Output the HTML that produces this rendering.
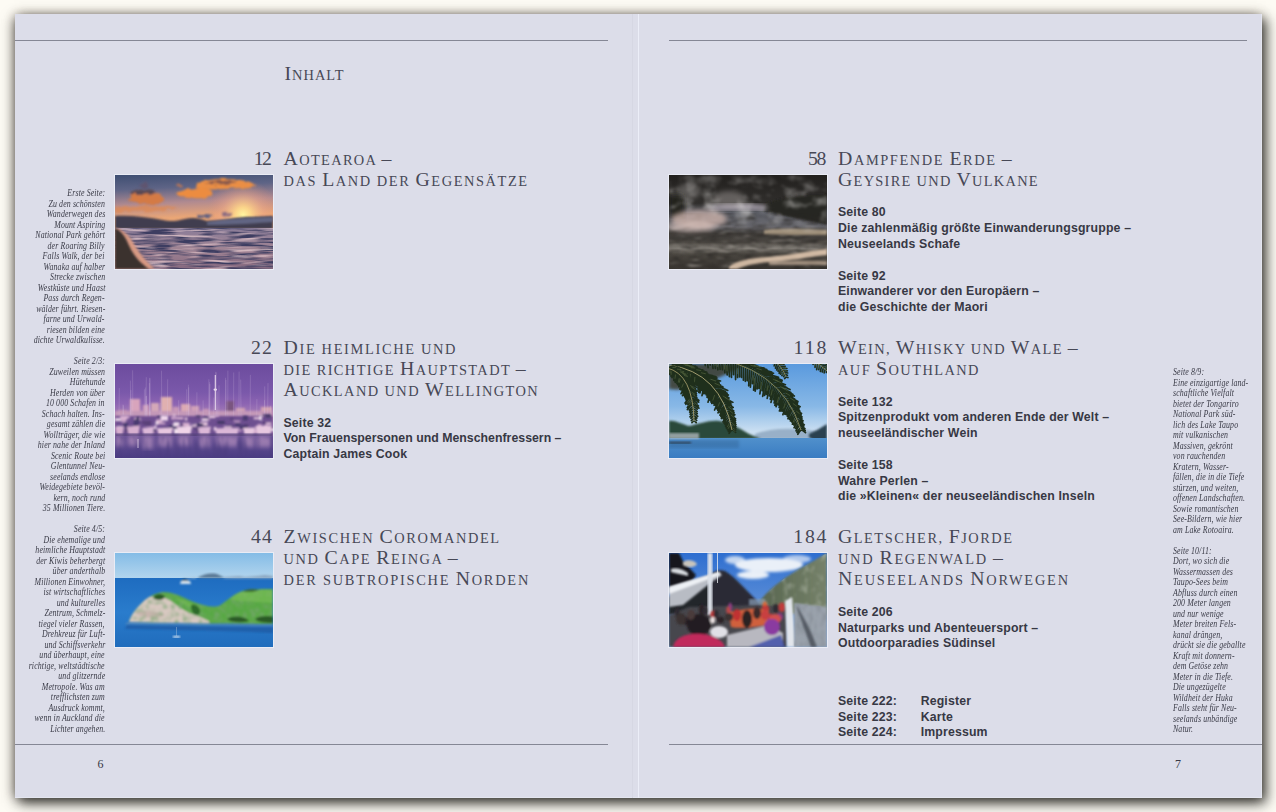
<!DOCTYPE html>
<html><head><meta charset="utf-8"><style>
html,body{margin:0;padding:0;}
body{width:1276px;height:812px;overflow:hidden;background:#fdfbf4;position:relative;}
.page{position:absolute;left:15px;top:14px;width:1247px;height:784px;background:#dcdde9;
 box-shadow: inset -1px -1px 0 #e4e6f0, 4px 5px 12px rgba(35,35,30,0.85), -3px 2px 12px -2px rgba(90,85,80,0.65), 0 -2px 10px -2px rgba(125,108,88,0.38);}
.gut{position:absolute;left:638px;top:14px;width:1px;height:784px;background:#eceef8;}
.gut2{position:absolute;left:632px;top:14px;width:1px;height:784px;background:#d6d7e3;}
.rule{position:absolute;height:1px;background:#858795;}
.l{position:absolute;white-space:pre;line-height:0;}
.ph{position:absolute;overflow:hidden;box-shadow:0 0 0 1px rgba(240,242,250,0.7);}
.ph svg{display:block;}
</style></head><body>
<div class="page"></div>
<div class="gut2"></div><div class="gut"></div>
<div class="rule" style="left:15px;top:40px;width:593px"></div>
<div class="rule" style="left:669px;top:40px;width:578px"></div>
<div class="rule" style="left:15px;top:744px;width:593px"></div>
<div class="rule" style="left:669px;top:744px;width:593px"></div>
<!-- P1 sunset -->
<div class="ph" style="left:115px;top:175px;width:158px;height:94px">
<svg width="158" height="94" viewBox="0 0 158 94">
<defs>
<linearGradient id="p1sky" x1="0" y1="0" x2="0.08" y2="1">
<stop offset="0" stop-color="#3e4e72"/><stop offset="0.16" stop-color="#5e6486"/><stop offset="0.32" stop-color="#b08a90"/><stop offset="0.48" stop-color="#eaa676"/></linearGradient>
<radialGradient id="p1sun" gradientUnits="userSpaceOnUse" cx="128" cy="40" r="36"><stop offset="0" stop-color="#fff6a0"/><stop offset="0.22" stop-color="#fcd68a" stop-opacity="0.95"/><stop offset="0.6" stop-color="#f0a888" stop-opacity="0.45"/><stop offset="1" stop-color="#e0907a" stop-opacity="0"/></radialGradient>
<linearGradient id="p1wat" x1="0" y1="0" x2="0" y2="1"><stop offset="0" stop-color="#8a7c98"/><stop offset="0.5" stop-color="#a08494"/><stop offset="1" stop-color="#866a80"/></linearGradient>
<filter id="b1"><feGaussianBlur stdDeviation="0.8"/></filter>
<filter id="b2"><feGaussianBlur stdDeviation="1.2"/></filter>
<filter id="p1w1" x="0" y="0" width="100%" height="100%" color-interpolation-filters="sRGB"><feTurbulence type="fractalNoise" baseFrequency="0.035 0.4" numOctaves="2" seed="4"/>
<feColorMatrix type="matrix" values="0 0 0 0 0.24  0 0 0 0 0.24  0 0 0 0 0.38  3.6 0 0 0 -1.45"/></filter>
<filter id="p1w2" x="0" y="0" width="100%" height="100%"><feTurbulence type="fractalNoise" baseFrequency="0.035 0.35" numOctaves="2" seed="11"/>
<feColorMatrix type="matrix" values="0 0 0 0 0.84  0 0 0 0 0.62  0 0 0 0 0.64  2.6 0 0 0 -1.35"/></filter>
<filter id="p1cl" x="-20%" y="-50%" width="140%" height="200%"><feTurbulence type="fractalNoise" baseFrequency="0.12 0.2" numOctaves="2" seed="2" result="n"/><feDisplacementMap in="SourceGraphic" in2="n" scale="6" xChannelSelector="R" yChannelSelector="G"/><feGaussianBlur stdDeviation="0.8"/></filter>
</defs>
<rect width="158" height="94" fill="url(#p1sky)"/>
<rect width="158" height="94" fill="url(#p1sun)"/>
<g filter="url(#p1cl)">
<path d="M82,9 C88,4 108,3 124,5 C132,6 142,8 140,11 C132,13 110,14 92,15 C86,15 80,12 82,9Z" fill="#ea8e44"/>
<path d="M90,8 C98,5 112,5 122,7 C112,10 100,10 90,8Z" fill="#8a5a4c"/>
<path d="M62,19 C65,14 78,12 90,14 C100,16 98,21 88,23 C78,24 63,23 62,19Z" fill="#ec8c40"/>
<path d="M14,24 C14,18 22,15 32,17 C42,16 50,20 48,25 C46,29 36,30 26,29 C18,28 14,26 14,24Z" fill="#d47a44"/>
<path d="M16,19 C20,14 32,13 40,16 C36,20 24,21 16,19Z" fill="#5a4852"/>
<path d="M0,33 C10,30 40,30 64,33 C54,36 30,37 0,37Z" fill="#e0884e" opacity="0.7"/>
<ellipse cx="29" cy="10" rx="4" ry="2" fill="#5e5470"/>
<ellipse cx="64" cy="11" rx="3" ry="1.5" fill="#c87850" opacity="0.8"/>
<ellipse cx="90" cy="41" rx="8" ry="2" fill="#5e5e80"/>
<ellipse cx="112" cy="39" rx="5" ry="1.5" fill="#8a6a80"/>
</g>
<path d="M0,41 C15,40 32,42 48,45 C56,47 62,46 70,44 C78,42 84,43 92,46 C104,46 118,43 132,42 C145,42 152,41 158,41 L158,54 L0,54 Z" fill="#403e50" filter="url(#b1)"/>
<path d="M92,47 C108,44 128,43 158,42 L158,47 C130,49 110,50 92,50Z" fill="#6a7090" opacity="0.8" filter="url(#b2)"/>
<rect x="0" y="53" width="158" height="41" fill="url(#p1wat)"/>
<rect x="0" y="53" width="158" height="41" filter="url(#p1w1)"/>
<rect x="0" y="53" width="158" height="41" filter="url(#p1w2)"/>
<path d="M0,53 C6,54 12,58 16,64 C22,74 28,84 40,94 L0,94 Z" fill="#d89a84" filter="url(#b1)"/>
<path d="M0,53 C5,55 9,60 12,66 C16,76 22,86 34,94 L0,94 Z" fill="#3a302e" filter="url(#b1)"/>
</svg></div>

<!-- P2 marina -->
<div class="ph" style="left:115px;top:364px;width:158px;height:94px">
<svg width="158" height="94" viewBox="0 0 158 94">
<defs>
<linearGradient id="p2sky" x1="0" y1="0" x2="0" y2="1"><stop offset="0" stop-color="#6c4c9e"/><stop offset="0.3" stop-color="#7a58aa"/><stop offset="0.42" stop-color="#8c64b2"/><stop offset="0.58" stop-color="#b088b8"/></linearGradient>
<linearGradient id="p2wat" x1="0" y1="0" x2="0" y2="1"><stop offset="0" stop-color="#6a5296"/><stop offset="1" stop-color="#4a3c82"/></linearGradient>
<filter id="c1"><feGaussianBlur stdDeviation="0.8"/></filter>
<filter id="c2"><feGaussianBlur stdDeviation="1.2"/></filter>
<filter id="c3"><feGaussianBlur stdDeviation="2"/></filter>
<filter id="p2r" x="0" y="0" width="100%" height="100%" color-interpolation-filters="sRGB"><feTurbulence type="fractalNoise" baseFrequency="0.22 0.04" numOctaves="2" seed="5"/>
<feColorMatrix type="matrix" values="0 0 0 0 0.3  0 0 0 0 0.24  0 0 0 0 0.5  3 0 0 0 -1.4"/><feGaussianBlur stdDeviation="0.8"/></filter>
</defs>
<rect width="158" height="94" fill="url(#p2sky)"/>
<g filter="url(#c2)"><rect x="15" y="35" width="10" height="20" fill="#d8a4bc"/><rect x="28" y="41" width="6" height="14" fill="#cc9ab8"/><rect x="36" y="39" width="8" height="16" fill="#d4a8b8"/><rect x="46" y="33" width="11" height="22" fill="#e0b0b0"/><rect x="58" y="43" width="6" height="12" fill="#c898b8"/><rect x="66" y="40" width="9" height="15" fill="#dcaab4"/><rect x="76" y="42" width="8" height="13" fill="#d0a0b8"/><rect x="88" y="45" width="6" height="10" fill="#c898b8"/><rect x="111" y="37" width="8" height="18" fill="#7a5480"/><rect x="121" y="44" width="9" height="11" fill="#d0a0b4"/><rect x="132" y="47" width="12" height="8" fill="#c898b8"/><rect x="146" y="43" width="11" height="12" fill="#d4a4b4"/><rect x="4" y="46" width="8" height="9" fill="#c090b0"/><rect x="0" y="47" width="158" height="9" fill="#c498b8"/></g>
<path d="M100.3,11 L100.3,46" stroke="#e8d8ec" stroke-width="1.1"/>
<ellipse cx="100.3" cy="25.6" rx="1.8" ry="1.2" fill="#e8d8ec"/>
<path d="M71.7,25.3L72.1,64M73.7,23.3L73.8,64M30.4,23.5L30.6,64M124.1,7.6L123.9,64M16.0,34.8L16.2,64M8.4,41.3L8.9,64M102.7,27.4L102.4,64M4.3,24.1L3.9,64M31.3,13.2L30.8,64M73.4,20.7L73.8,64M81.9,28.3L81.9,64M104.0,21.4L103.8,64M155.6,41.8L156.0,64M111.0,16.0L110.7,64M46.5,6.7L46.8,64M63.7,36.2L63.5,64M149.5,36.2L149.0,64M34.3,38.6L34.3,64M153.0,19.1L152.5,64M98.9,33.6L98.7,64M15.4,16.6L15.9,64M118.7,8.5L118.5,64M17.6,6.3L17.9,64M29.4,25.3L29.3,64M31.4,31.8L31.0,64M101.1,8.4L101.1,64M34.8,14.3L35.3,64M125.7,15.6L126.1,64M34.4,19.0L34.8,64M100.8,7.8L101.3,64M34.8,13.8L35.1,64M52.7,15.3L52.2,64M15.9,26.1L15.6,64M94.6,18.1L94.6,64M149.7,22.4L149.8,64M135.4,10.9L135.1,64M141.9,35.1L141.6,64M31.2,32.1L31.7,64M32.3,40.1L32.7,64M94.9,20.0L94.5,64M8.0,40.6L7.7,64M110.5,13.8L110.8,64M93.9,15.2L93.5,64M112.9,6.6L112.7,64M88.1,36.4L88.3,64M45.2,38.9L44.9,64" stroke="#d8c4e4" stroke-width="0.6" opacity="0.32" fill="none"/>
<rect x="0" y="52" width="158" height="20" fill="#6e5090" filter="url(#c1)"/>
<g filter="url(#c1)"><rect x="0.6" y="54.3" width="4.7" height="1.7" fill="#d8b0d0"/><rect x="42.5" y="58.5" width="7.8" height="1.8" fill="#d8b0d0"/><rect x="138.8" y="65.7" width="5.9" height="3.9" fill="#d8b0d0"/><rect x="91.2" y="64.8" width="4.8" height="2.8" fill="#3e3262"/><rect x="150.1" y="50.3" width="5.8" height="3.2" fill="#3e3262"/><rect x="48.4" y="66.0" width="2.5" height="3.4" fill="#f0d8ec"/><rect x="140.2" y="61.8" width="6.2" height="4.3" fill="#c8a0c8"/><rect x="53.6" y="61.0" width="7.4" height="4.5" fill="#4a3a70"/><rect x="147.2" y="50.5" width="5.0" height="1.6" fill="#4a3a70"/><rect x="57.9" y="50.2" width="2.4" height="1.8" fill="#e4c4dc"/><rect x="154.9" y="64.1" width="6.4" height="2.9" fill="#f4e4f0"/><rect x="67.6" y="63.4" width="2.5" height="4.1" fill="#f0d8ec"/><rect x="47.0" y="51.4" width="2.1" height="4.9" fill="#e4c4dc"/><rect x="76.6" y="59.8" width="7.5" height="2.4" fill="#f0d8ec"/><rect x="56.1" y="52.3" width="5.7" height="3.3" fill="#c8a0c8"/><rect x="102.3" y="57.1" width="7.4" height="2.6" fill="#3e3262"/><rect x="29.4" y="56.9" width="6.8" height="4.7" fill="#5a4078"/><rect x="58.7" y="59.3" width="3.9" height="2.0" fill="#f4e4f0"/><rect x="53.4" y="64.3" width="2.2" height="1.7" fill="#3e3262"/><rect x="127.9" y="51.8" width="4.8" height="4.7" fill="#4a3a70"/><rect x="58.4" y="58.3" width="6.0" height="4.0" fill="#f4e4f0"/><rect x="48.6" y="63.3" width="3.7" height="3.6" fill="#3e3262"/><rect x="88.2" y="54.9" width="6.7" height="1.6" fill="#d8b0d0"/><rect x="62.0" y="53.0" width="6.6" height="2.4" fill="#d8b0d0"/><rect x="123.9" y="65.7" width="2.7" height="1.9" fill="#c8a0c8"/><rect x="149.4" y="61.0" width="3.2" height="3.2" fill="#d8b0d0"/><rect x="110.8" y="62.1" width="5.2" height="1.6" fill="#5a4078"/><rect x="41.0" y="55.5" width="6.2" height="3.3" fill="#d8b0d0"/><rect x="60.2" y="62.7" width="7.4" height="1.8" fill="#4a3a70"/><rect x="18.5" y="57.3" width="5.8" height="4.7" fill="#4a3a70"/><rect x="84.9" y="60.4" width="5.0" height="4.4" fill="#c8a0c8"/><rect x="71.3" y="60.4" width="3.2" height="4.0" fill="#e4c4dc"/><rect x="31.7" y="64.4" width="7.9" height="4.9" fill="#c8a0c8"/><rect x="39.4" y="61.5" width="2.1" height="3.3" fill="#f0d8ec"/><rect x="67.7" y="58.8" width="6.6" height="3.2" fill="#f0d8ec"/><rect x="32.5" y="63.9" width="4.6" height="1.6" fill="#c8a0c8"/><rect x="106.5" y="64.7" width="4.8" height="5.0" fill="#f4e4f0"/><rect x="147.4" y="57.9" width="7.7" height="1.8" fill="#5a4078"/><rect x="67.4" y="58.9" width="7.0" height="3.5" fill="#d8b0d0"/><rect x="80.6" y="63.5" width="5.4" height="2.6" fill="#4a3a70"/><rect x="148.9" y="63.9" width="5.7" height="2.6" fill="#d8b0d0"/><rect x="151.0" y="58.4" width="5.4" height="2.2" fill="#e4c4dc"/><rect x="77.5" y="59.7" width="2.2" height="4.9" fill="#4a3a70"/><rect x="84.0" y="65.8" width="2.7" height="1.8" fill="#d8b0d0"/><rect x="8.4" y="58.6" width="4.5" height="4.8" fill="#4a3a70"/><rect x="40.5" y="57.6" width="2.8" height="3.0" fill="#f4e4f0"/><rect x="80.9" y="51.7" width="4.5" height="1.6" fill="#3e3262"/><rect x="18.5" y="62.5" width="2.1" height="2.2" fill="#5a4078"/><rect x="-0.1" y="54.5" width="6.3" height="2.4" fill="#f4e4f0"/><rect x="14.6" y="61.7" width="2.7" height="3.3" fill="#3e3262"/><rect x="111.4" y="61.2" width="7.3" height="1.6" fill="#4a3a70"/><rect x="128.4" y="59.9" width="5.2" height="4.5" fill="#5a4078"/><rect x="81.7" y="63.6" width="5.7" height="4.5" fill="#5a4078"/><rect x="142.5" y="60.0" width="4.1" height="2.1" fill="#c8a0c8"/><rect x="138.7" y="53.1" width="6.7" height="2.2" fill="#e4c4dc"/><rect x="19.2" y="53.8" width="6.4" height="2.4" fill="#e4c4dc"/><rect x="66.7" y="65.1" width="5.3" height="4.0" fill="#5a4078"/><rect x="61.6" y="61.0" width="2.1" height="2.2" fill="#c8a0c8"/><rect x="142.0" y="65.5" width="2.7" height="3.3" fill="#c8a0c8"/><rect x="77.4" y="61.0" width="3.1" height="1.7" fill="#e4c4dc"/><rect x="1.8" y="62.2" width="5.7" height="4.7" fill="#f4e4f0"/><rect x="21.2" y="53.0" width="3.2" height="4.4" fill="#3e3262"/><rect x="144.4" y="51.5" width="2.4" height="4.8" fill="#f4e4f0"/><rect x="10.3" y="51.5" width="4.3" height="3.0" fill="#c8a0c8"/><rect x="66.0" y="59.6" width="2.1" height="4.0" fill="#5a4078"/><rect x="26.6" y="57.3" width="6.4" height="2.9" fill="#5a4078"/><rect x="93.6" y="51.5" width="6.8" height="2.6" fill="#e4c4dc"/><rect x="124.7" y="61.3" width="7.2" height="3.7" fill="#4a3a70"/><rect x="88.0" y="53.1" width="5.5" height="2.7" fill="#3e3262"/><rect x="42.2" y="51.9" width="6.5" height="2.1" fill="#4a3a70"/><rect x="19.0" y="55.3" width="5.2" height="2.8" fill="#4a3a70"/><rect x="118.9" y="56.5" width="6.3" height="1.7" fill="#c8a0c8"/><rect x="45.7" y="51.6" width="7.3" height="5.0" fill="#f0d8ec"/><rect x="34.7" y="65.1" width="6.0" height="2.7" fill="#4a3a70"/><rect x="88.0" y="58.5" width="4.3" height="5.0" fill="#5a4078"/><rect x="108.8" y="62.2" width="7.9" height="1.6" fill="#e4c4dc"/><rect x="114.7" y="54.1" width="4.4" height="1.7" fill="#5a4078"/><rect x="100.4" y="50.2" width="3.6" height="2.5" fill="#c8a0c8"/><rect x="84.9" y="58.1" width="7.8" height="3.5" fill="#e4c4dc"/><rect x="98.8" y="63.0" width="2.5" height="3.6" fill="#f0d8ec"/><rect x="59.1" y="65.0" width="4.3" height="4.9" fill="#f4e4f0"/><rect x="83.6" y="59.5" width="4.6" height="3.2" fill="#3e3262"/><rect x="81.2" y="59.6" width="4.2" height="2.5" fill="#3e3262"/><rect x="86.6" y="54.5" width="6.3" height="2.5" fill="#f0d8ec"/><rect x="120.1" y="59.4" width="5.8" height="2.9" fill="#4a3a70"/><rect x="6.3" y="55.0" width="4.4" height="3.5" fill="#c8a0c8"/><rect x="9.6" y="64.5" width="4.6" height="3.2" fill="#5a4078"/><rect x="5.2" y="51.6" width="6.9" height="4.7" fill="#d8b0d0"/><rect x="152.7" y="63.1" width="5.6" height="1.9" fill="#4a3a70"/><rect x="70.0" y="53.3" width="2.3" height="3.3" fill="#e4c4dc"/><path d="M0,63.1 L9,62.8 L7.5,70.5 L1.5,70.5Z" fill="#d8b0d0"/><path d="M12,62.8 L25,61.6 L23.5,70.5 L13.5,70.5Z" fill="#d8b0d0"/><path d="M27,64.2 L39,62.6 L37.5,70.5 L28.5,70.5Z" fill="#dcb8d8"/><path d="M42,64.2 L58,63.7 L56.5,70.5 L43.5,70.5Z" fill="#e8c8e0"/><path d="M62,62.9 L77,61.9 L75.5,70.5 L63.5,70.5Z" fill="#f0d4e8"/><path d="M83,63.8 L96,62.4 L94.5,70.5 L84.5,70.5Z" fill="#dcb8d8"/><path d="M100,64.3 L124,63.9 L122.5,70.5 L101.5,70.5Z" fill="#dcb8d8"/><path d="M128,64.0 L140,63.6 L138.5,70.5 L129.5,70.5Z" fill="#e8c8e0"/><path d="M141,62.0 L157,61.5 L155.5,70.5 L142.5,70.5Z" fill="#e8c8e0"/></g>
<rect x="0" y="70" width="158" height="3" fill="#4e3e78" filter="url(#c1)"/>
<rect x="0" y="72" width="158" height="22" fill="url(#p2wat)"/>
<g filter="url(#c3)" opacity="0.55"><rect x="1" y="72" width="7" height="10.3" fill="#c8a0c8"/><rect x="13" y="72" width="11" height="9.8" fill="#c8a0c8"/><rect x="28" y="72" width="10" height="12.8" fill="#c8a0c8"/><rect x="43" y="72" width="14" height="10.5" fill="#c8a0c8"/><rect x="63" y="72" width="13" height="9.4" fill="#c8a0c8"/><rect x="84" y="72" width="11" height="11.2" fill="#c8a0c8"/><rect x="101" y="72" width="22" height="10.5" fill="#c8a0c8"/><rect x="129" y="72" width="10" height="11.1" fill="#c8a0c8"/><rect x="142" y="72" width="14" height="11.1" fill="#c8a0c8"/></g>
<rect x="0" y="72" width="158" height="22" filter="url(#p2r)" opacity="0.7"/>
<path d="M23,75 L23,84" stroke="#f0e0f0" stroke-width="0.9" opacity="0.8"/>
</svg></div>

<!-- P3 island -->
<div class="ph" style="left:115px;top:553px;width:158px;height:94px">
<svg width="158" height="94" viewBox="0 0 158 94">
<defs>
<linearGradient id="p3sky" x1="0" y1="0" x2="0" y2="1"><stop offset="0" stop-color="#84bce6"/><stop offset="1" stop-color="#b4d6ee"/></linearGradient>
<linearGradient id="p3sea" x1="0" y1="0" x2="0" y2="1"><stop offset="0" stop-color="#1e6cc0"/><stop offset="0.5" stop-color="#2a7ccc"/><stop offset="1" stop-color="#206cbc"/></linearGradient>
<filter id="d1"><feGaussianBlur stdDeviation="0.8"/></filter>
<filter id="d2"><feGaussianBlur stdDeviation="1.2"/></filter>
<filter id="p3t" x="0" y="0" width="100%" height="100%"><feTurbulence type="fractalNoise" baseFrequency="0.25" numOctaves="2" seed="3"/>
<feColorMatrix type="matrix" values="0 0 0 0 0.2  0 0 0 0 0.38  0 0 0 0 0.18  3.5 0 0 0 -1.7"/><feGaussianBlur stdDeviation="0.8"/></filter>
<clipPath id="p3isl"><path d="M14,69 C16,62 22,54 30,47 C36,42 42,40 48,39 C56,39 64,42 74,47 C86,52 96,55 104,53 C112,48 120,40 128,38 C140,36 150,36 158,36 L158,71 C120,71 60,70 14,69Z"/></clipPath>
</defs>
<rect width="158" height="26" fill="url(#p3sky)"/>
<rect y="25" width="158" height="69" fill="url(#p3sea)"/>
<g filter="url(#d1)">
<path d="M82,25 C88,21 98,19 104,22 C106,23 108,24 110,25Z" fill="#5a7894"/>
<path d="M110,24 L124,23 L130,24 L142,23 L150,22 L158,23 L158,25.5 L108,25.5Z" fill="#8aa6c0"/>
<path d="M72,25 L80,24 L82,25.5 L70,25.5Z" fill="#a8c0d4"/>
<path d="M66,28 C68,25 72,25 74,28Z" fill="#3a5a70"/>
<path d="M66,28 L75,28 L76,31 L65,31Z" fill="#d8e4ee"/>
</g>
<g filter="url(#d1)">
<path d="M14,69 C16,62 22,54 30,47 C36,42 42,40 48,39 C56,39 64,42 74,47 C86,52 96,55 104,53 C112,48 120,40 128,38 C140,36 150,36 158,36 L158,71 C120,71 60,70 14,69Z" fill="#58a844"/>
<g clip-path="url(#p3isl)">
<path d="M0,80 L10,66 C16,58 24,48 34,44 C42,42 50,44 56,48 C64,54 72,60 80,62 C86,64 90,66 94,68 L96,80Z" fill="#dccac4"/>
<path d="M20,60 C30,56 40,58 50,62 C44,66 30,66 20,60Z" fill="#c0a8a4" opacity="0.6"/>
<rect x="0" y="30" width="158" height="45" filter="url(#p3t)"/>
<path d="M110,44 C122,38 140,36 158,37 L158,50 C140,48 122,50 110,44Z" fill="#7cc058" opacity="0.6"/>
<path d="M60,45 C68,46 76,50 84,54 L74,54 C70,52 64,48 60,45Z" fill="#7cc058" opacity="0.5"/>
</g>
<path d="M38,44 C42,40 48,40 50,44 C48,48 40,48 38,44Z" fill="#2a5a28"/>
<path d="M76,52 C80,50 86,54 85,60 C82,64 76,62 76,52Z" fill="#2e6a2a"/>
<path d="M112,66 C118,62 130,63 134,68 C126,70 116,70 112,66Z" fill="#2a5a28"/>
<path d="M140,66 C146,62 156,63 158,64 L158,70 C150,70 142,69 140,66Z" fill="#2a5a28"/>
<path d="M128,38 C132,36 140,36 144,37 C140,39 132,40 128,38Z" fill="#3a6a30"/>
</g>
<path d="M12,69 C60,70 120,71 158,71 L158,74 C120,74 60,73 10,72Z" fill="#a0a0a0" opacity="0.25" filter="url(#d1)"/>
<path d="M12,72 C60,73 120,74 158,74 L158,80 C120,78 60,77 10,76Z" fill="#1a4c90" opacity="0.5" filter="url(#d2)"/>
<rect x="58" y="83" width="7" height="1.8" fill="#e8f0f8" filter="url(#d1)"/>
<path d="M61.5,74 L61.5,83" stroke="#c8d8e8" stroke-width="0.5" opacity="0.7"/>
</svg></div>

<!-- P4 geysers -->
<div class="ph" style="left:669px;top:175px;width:158px;height:94px">
<svg width="158" height="94" viewBox="0 0 158 94">
<defs>
<linearGradient id="p4bg" x1="0" y1="0" x2="0" y2="1"><stop offset="0" stop-color="#22201e"/><stop offset="0.3" stop-color="#302e2c"/><stop offset="0.4" stop-color="#5a5c64"/><stop offset="0.55" stop-color="#6a6a70"/><stop offset="0.62" stop-color="#3e3b38"/><stop offset="0.72" stop-color="#4e4a45"/><stop offset="0.78" stop-color="#8a857e"/><stop offset="0.84" stop-color="#4a4640"/><stop offset="1" stop-color="#3a3632"/></linearGradient>
<filter id="e1"><feGaussianBlur stdDeviation="0.8"/></filter>
<filter id="e2"><feGaussianBlur stdDeviation="2.5"/></filter>
<filter id="p4s" x="0" y="0" width="100%" height="100%"><feTurbulence type="fractalNoise" baseFrequency="0.06 0.09" numOctaves="3" seed="6"/>
<feColorMatrix type="matrix" values="0 0 0 0 0.78  0 0 0 0 0.76  0 0 0 0 0.74  2.6 0 0 0 -1.25"/><feGaussianBlur stdDeviation="1.2"/></filter>
<filter id="p4g" x="0" y="0" width="100%" height="100%" color-interpolation-filters="sRGB"><feTurbulence type="fractalNoise" baseFrequency="0.08 0.5" numOctaves="2" seed="12"/>
<feColorMatrix type="matrix" values="0 0 0 0 0.16  0 0 0 0 0.15  0 0 0 0 0.14  2.2 0 0 0 -0.95"/><feGaussianBlur stdDeviation="0.8"/></filter>
<filter id="p4h" x="0" y="0" width="100%" height="100%"><feTurbulence type="fractalNoise" baseFrequency="0.06 0.4" numOctaves="2" seed="21"/>
<feColorMatrix type="matrix" values="0 0 0 0 0.8  0 0 0 0 0.74  0 0 0 0 0.68  2.2 0 0 0 -1.3"/><feGaussianBlur stdDeviation="0.8"/></filter>
<linearGradient id="p4m" x1="0" y1="0" x2="0" y2="1"><stop offset="0" stop-color="#fff" stop-opacity="0.45"/><stop offset="0.6" stop-color="#fff" stop-opacity="1"/><stop offset="1" stop-color="#fff" stop-opacity="0"/></linearGradient>
<mask id="p4mask"><rect width="158" height="60" fill="url(#p4m)"/></mask>
</defs>
<rect width="158" height="94" fill="url(#p4bg)"/>
<path d="M95,30 C110,22 140,18 158,20 L158,50 C140,46 110,40 95,36Z" fill="#282624" filter="url(#e1)"/>
<path d="M0,18 L14,20 L16,44 L0,42Z" fill="#22201d" filter="url(#e2)"/>
<path d="M40,31 C60,28 80,28 98,31 L98,35 C80,35 60,35 40,35Z" fill="#a8a0ac" filter="url(#e2)"/>
<rect x="0" y="38" width="158" height="56" filter="url(#p4g)"/>
<rect x="0" y="50" width="158" height="44" filter="url(#p4h)" opacity="0.7"/>
<g filter="url(#e1)">
<path d="M95,55 C110,53 140,54 158,55 L158,60 C130,60 110,60 95,59Z" fill="#dcc4a4" opacity="0.6"/>
<path d="M60,92 C66,86 82,83 100,82 C120,80 140,76 158,74 L158,80 C140,82 120,86 100,87 C86,88 74,91 68,94 L60,94Z" fill="#e8cdb4" opacity="0.85"/>
<path d="M100,87 C115,86 135,85 158,86 L158,90 C135,90 115,90 100,90Z" fill="#d8c0a8" opacity="0.6"/>
</g>
<g mask="url(#p4mask)" opacity="0.6"><rect x="0" y="0" width="158" height="60" filter="url(#p4s)"/></g>
<g filter="url(#e2)">
<ellipse cx="30" cy="44" rx="28" ry="9" fill="#d8bcb4" opacity="0.7"/>
<ellipse cx="22" cy="52" rx="24" ry="5" fill="#e4ccc4" opacity="0.6"/>
<ellipse cx="60" cy="24" rx="16" ry="8" fill="#c8c4c0" opacity="0.35"/>
<ellipse cx="20" cy="16" rx="12" ry="8" fill="#c8c4c0" opacity="0.3"/>
</g>
</svg></div>

<!-- P5 palm -->
<div class="ph" style="left:669px;top:364px;width:158px;height:94px">
<svg width="158" height="94" viewBox="0 0 158 94">
<defs>
<linearGradient id="p5sky" x1="0" y1="0" x2="0" y2="1"><stop offset="0" stop-color="#5a9ade"/><stop offset="0.45" stop-color="#88b8e6"/><stop offset="0.72" stop-color="#cce0f2"/></linearGradient>
<linearGradient id="p5wat" x1="0" y1="0" x2="0" y2="1"><stop offset="0" stop-color="#5090cc"/><stop offset="1" stop-color="#3a7cc2"/></linearGradient>
<filter id="f1"><feGaussianBlur stdDeviation="0.8"/></filter>
<filter id="f2"><feGaussianBlur stdDeviation="0.8"/></filter>
<filter id="f3"><feGaussianBlur stdDeviation="1.6"/></filter>
</defs>
<rect width="158" height="94" fill="url(#p5sky)"/>
<path d="M86,70 C96,66 110,64 125,65 C135,65 142,66 148,68 L148,75 L86,75Z" fill="#98b0c8" filter="url(#f1)"/>
<path d="M0,57 C6,56 12,60 20,62 C30,60 40,56 50,57 C60,58 70,64 80,70 L92,75 L0,76Z" fill="#2c4a3a" filter="url(#f1)"/>
<path d="M140,70 C146,67 152,64 158,60 L158,82 C150,80 144,76 140,73Z" fill="#2a4050" filter="url(#f1)"/>
<rect x="0" y="74" width="158" height="20" fill="url(#p5wat)"/>
<rect x="0" y="76" width="70" height="8" fill="#2a5a88" opacity="0.35" filter="url(#f3)"/>
<rect x="0" y="69" width="30" height="6" fill="#c0c4cc" opacity="0.7" filter="url(#f1)"/>
<rect x="0" y="78" width="22" height="1.6" fill="#2a3440" filter="url(#f1)"/>
<path d="M0,0 L80,0 C62,8 42,18 22,24 C12,26 4,26 0,25Z" fill="#3e3a2a" opacity="0.85" filter="url(#f3)"/>
<g><path d="M34.9,-7.5Q35.6,-4.4 36.3,1.7M34.9,-7.5Q36.3,-10.2 42.5,-10.1M37.5,-7.1Q38.3,-3.6 39.1,3.7M37.5,-7.1Q39.2,-10.4 46.4,-10.1M40.1,-6.8Q40.6,-4.1 41.2,1.2M40.1,-6.8Q41.3,-9.1 46.7,-8.9M42.6,-6.4Q43.3,-2.8 44.0,4.4M42.6,-6.4Q44.4,-9.5 51.6,-9.1M45.1,-5.9Q45.7,-2.5 46.4,4.5M45.1,-5.9Q46.9,-9.0 53.9,-8.5M47.6,-5.5Q48.2,-1.7 48.9,5.8M47.6,-5.5Q49.6,-8.7 57.1,-8.1M50.1,-5.0Q50.6,-1.5 51.1,5.5M50.1,-5.0Q51.9,-8.0 58.9,-7.3M52.5,-4.5Q52.9,-1.0 53.4,5.8M52.5,-4.5Q54.3,-7.4 61.2,-6.6M54.9,-3.9Q55.4,0.3 55.9,8.8M54.9,-3.9Q57.2,-7.5 65.7,-6.4M57.2,-3.3Q57.7,1.5 58.2,11.0M57.2,-3.3Q59.9,-7.3 69.4,-6.0M59.5,-2.7Q59.9,2.4 60.4,12.6M59.5,-2.7Q62.5,-6.9 72.6,-5.4M61.8,-2.0Q62.2,3.1 62.5,13.5M61.8,-2.0Q64.9,-6.2 75.1,-4.6M64.1,-1.4Q64.3,2.6 64.5,10.7M64.1,-1.4Q66.5,-4.6 74.4,-3.2M66.3,-0.7Q66.4,4.8 66.6,15.6M66.3,-0.7Q69.7,-4.9 80.3,-2.9M68.5,0.1Q68.5,4.5 68.6,13.4M68.5,0.1Q71.3,-3.4 80.0,-1.6M70.6,0.9Q70.6,4.9 70.6,12.8M70.6,0.9Q73.2,-2.2 81.0,-0.5M72.7,1.7Q72.6,5.6 72.5,13.5M72.7,1.7Q75.3,-1.3 83.0,0.5M74.8,2.5Q74.6,7.1 74.4,16.2M74.8,2.5Q77.9,-0.9 86.8,1.3M76.9,3.4Q76.6,8.0 76.3,17.3M76.9,3.4Q80.1,0.0 89.0,2.3M78.9,4.3Q78.5,8.4 78.2,16.8M78.9,4.3Q81.8,1.3 89.9,3.5M80.9,5.2Q80.3,10.7 79.7,21.8M80.9,5.2Q84.8,1.3 95.5,4.3M82.8,6.2Q82.1,11.8 81.4,23.1M82.8,6.2Q86.9,2.3 97.8,5.5M84.7,7.2Q84.1,11.3 83.5,19.7M84.7,7.2Q87.8,4.4 95.8,6.9M86.6,8.2Q85.6,14.2 84.6,26.2M86.6,8.2Q91.2,4.2 102.7,8.0M88.5,9.2Q87.4,15.2 86.2,27.1M88.5,9.2Q93.1,5.4 104.5,9.3M90.3,10.3Q89.3,15.1 88.2,24.9M90.3,10.3Q94.1,7.3 103.3,10.6M92.0,11.5Q91.1,15.8 90.0,24.5M92.0,11.5Q95.6,8.8 103.8,11.9M93.8,12.6Q92.4,18.3 90.9,29.9M93.8,12.6Q98.5,9.2 109.5,13.4M95.5,13.8Q94.4,18.0 93.2,26.6M95.5,13.8Q99.1,11.3 107.2,14.6M97.2,15.0Q95.5,20.7 93.7,32.4M97.2,15.0Q102.1,11.7 113.1,16.3M98.8,16.2Q97.3,21.2 95.6,31.4M98.8,16.2Q103.2,13.5 112.7,17.6M100.4,17.5Q99.0,21.7 97.5,30.4M100.4,17.5Q104.2,15.2 112.3,18.9M102.0,18.8Q100.2,23.9 98.2,34.4M102.0,18.8Q106.7,16.2 116.4,20.7M103.6,20.2Q102.1,24.0 100.5,32.0M103.6,20.2Q107.2,18.2 114.6,21.8M105.1,21.5Q103.3,25.9 101.3,35.1M105.1,21.5Q109.3,19.4 117.7,23.6M106.6,22.9Q104.4,27.9 102.0,38.4M106.6,22.9Q111.4,20.6 121.0,25.5M108.0,24.4Q106.3,27.9 104.5,35.6M108.0,24.4Q111.6,22.7 118.5,26.4M109.4,25.8Q107.3,30.0 105.1,39.0M109.4,25.8Q113.7,24.0 121.8,28.5M110.8,27.3Q108.5,31.7 105.9,41.3M110.8,27.3Q115.4,25.5 124.0,30.4M112.1,28.9Q109.7,33.2 107.1,42.7M112.1,28.9Q116.8,27.1 125.3,32.1M113.5,30.4Q111.5,33.7 109.4,40.9M113.5,30.4Q117.0,29.2 123.5,33.1M114.7,32.0Q112.5,35.6 110.1,43.5M114.7,32.0Q118.7,30.7 125.8,35.1M116.0,33.6Q113.3,37.7 110.4,47.0M116.0,33.6Q120.6,32.2 128.9,37.5M117.2,35.3Q114.7,38.9 112.0,47.2M117.2,35.3Q121.4,34.1 128.7,38.9M118.4,37.0Q116.2,40.0 113.8,47.1M118.4,37.0Q122.0,36.0 128.2,40.2M119.5,38.7Q116.8,42.2 113.9,50.6M119.5,38.7Q123.8,37.7 131.1,42.7M120.6,40.4Q118.4,43.3 115.9,50.1M120.6,40.4Q124.2,39.7 130.0,43.9M121.7,42.2Q119.7,44.7 117.4,50.6M121.7,42.2Q124.8,41.6 129.9,45.4M122.7,44.0Q120.7,46.4 118.4,52.3M122.7,44.0Q125.9,43.5 130.9,47.3M123.7,45.9Q121.5,48.4 118.9,54.7M123.7,45.9Q127.1,45.4 132.5,49.5M124.7,47.7Q122.8,49.8 120.5,55.1M124.7,47.7Q127.6,47.4 132.1,50.9M125.7,49.6Q123.7,51.7 121.4,56.9M125.7,49.6Q128.5,49.4 133.0,52.9M126.6,51.6Q124.8,53.3 122.8,57.9M126.6,51.6Q129.1,51.4 132.9,54.6M127.5,53.5Q125.5,55.4 123.4,60.1M127.5,53.5Q130.1,53.4 134.1,56.8M128.3,55.5Q126.7,57.0 124.9,60.9M128.3,55.5Q130.5,55.5 133.7,58.3M129.1,57.6Q127.2,59.2 125.1,63.7M129.1,57.6Q131.6,57.5 135.3,60.8M129.9,59.6Q128.4,60.9 126.7,64.4M129.9,59.6Q131.8,59.6 134.7,62.2M130.6,61.7Q129.0,63.1 127.0,66.8M130.6,61.7Q132.7,61.8 135.9,64.6M131.3,63.8Q129.8,65.1 128.0,68.5M131.3,63.8Q133.3,63.9 136.2,66.6M132.0,66.0Q130.5,67.1 128.8,70.3M132.0,66.0Q133.8,66.1 136.5,68.6" stroke="#1f2f1c" stroke-width="1.7" stroke-linecap="round" fill="none"/><path d="M44.4,-9.5L48.5,-9.3M45.7,-2.5L46.1,1.5M48.2,-1.7L48.6,2.6M49.6,-8.7L53.9,-8.4M54.3,-7.4L58.3,-6.9M55.4,0.3L55.6,5.2M57.2,-7.5L62.1,-6.9M57.7,1.5L58.0,6.9M59.9,-7.3L65.4,-6.5M62.5,-6.9L68.3,-6.0M69.7,-4.9L75.7,-3.8M68.5,4.5L68.6,9.6M71.3,-3.4L76.3,-2.4M81.8,1.3L86.4,2.5M84.8,1.3L90.9,3.1M84.1,11.3L83.8,16.1M87.8,4.4L92.4,5.8M85.6,14.2L85.1,21.1M92.4,18.3L91.5,25.0M99.0,21.7L98.1,26.7M104.2,15.2L108.9,17.3M106.7,16.2L112.2,18.8M103.3,25.9L102.1,31.1M111.6,22.7L115.6,24.9M113.7,24.0L118.3,26.6M109.7,33.2L108.2,38.6M117.0,29.2L120.7,31.4M121.4,34.1L125.5,36.8M116.2,40.0L114.8,44.1M124.2,39.7L127.5,42.1M127.6,47.4L130.2,49.4M125.5,55.4L124.3,58.1" stroke="#5e6e44" stroke-width="0.7" stroke-linecap="round" fill="none" opacity="0.8"/><path d="M30,-8 Q112,0 132,66" fill="none" stroke="#8a8a5a" stroke-width="0.9"/><path d="M3.1,1.5Q3.5,3.7 4.0,8.2M3.1,1.5Q4.2,-0.5 8.7,-1.1M5.1,1.8Q5.5,4.5 6.0,10.0M5.1,1.8Q6.5,-0.5 11.9,-1.1M7.0,2.2Q7.5,5.4 8.0,11.7M7.0,2.2Q8.7,-0.5 15.0,-1.0M9.0,2.7Q9.3,5.8 9.7,12.1M9.0,2.7Q10.7,0.0 17.0,-0.4M10.9,3.1Q11.2,6.5 11.5,13.2M10.9,3.1Q12.8,0.4 19.5,0.1M12.7,3.7Q13.0,7.3 13.2,14.5M12.7,3.7Q14.9,0.7 22.1,0.6M14.6,4.2Q14.7,7.6 14.9,14.4M14.6,4.2Q16.6,1.5 23.5,1.6M16.4,4.8Q16.4,8.7 16.5,16.4M16.4,4.8Q18.8,1.8 26.5,2.1M18.1,5.4Q18.1,9.1 18.1,16.5M18.1,5.4Q20.5,2.6 27.9,3.1M19.9,6.1Q19.8,9.4 19.6,16.1M19.9,6.1Q22.1,3.7 28.7,4.2M21.6,6.8Q21.4,10.3 21.1,17.3M21.6,6.8Q24.0,4.3 30.9,5.1M23.2,7.6Q22.9,11.5 22.5,19.2M23.2,7.6Q26.0,4.9 33.7,5.9M24.9,8.4Q24.5,12.1 24.0,19.6M24.9,8.4Q27.6,5.8 35.0,7.0M26.5,9.2Q25.9,13.3 25.3,21.4M26.5,9.2Q29.5,6.5 37.6,8.0M28.1,10.1Q27.4,13.7 26.7,21.0M28.1,10.1Q30.9,7.7 38.1,9.2M29.6,11.0Q28.9,14.5 28.1,21.7M29.6,11.0Q32.4,8.8 39.4,10.4M31.1,12.0Q30.1,16.4 29.0,25.3M31.1,12.0Q34.7,9.3 43.4,11.5M32.6,13.0Q31.3,18.0 29.8,28.4M32.6,13.0Q36.9,10.0 47.0,12.7M34.1,14.0Q32.6,18.8 31.0,28.8M34.1,14.0Q38.2,11.2 47.9,14.1M35.5,15.1Q34.3,18.8 32.9,26.5M35.5,15.1Q38.8,13.0 46.2,15.4M36.9,16.2Q35.1,21.2 33.0,31.6M36.9,16.2Q41.4,13.5 51.5,17.0M38.2,17.4Q36.6,21.4 34.9,29.7M38.2,17.4Q42.0,15.3 50.0,18.3M39.5,18.6Q38.0,22.1 36.3,29.6M39.5,18.6Q43.0,16.8 50.2,19.6M40.8,19.8Q39.2,23.3 37.3,30.9M40.8,19.8Q44.3,18.1 51.5,21.1M42.1,21.1Q40.2,24.9 38.0,33.2M42.1,21.1Q46.0,19.4 53.8,22.8M43.3,22.4Q41.4,26.0 39.2,33.9M43.3,22.4Q47.1,20.9 54.5,24.3M44.5,23.8Q41.9,28.3 39.0,38.2M44.5,23.8Q49.3,21.9 58.7,26.4M45.6,25.2Q43.6,28.5 41.2,36.1M45.6,25.2Q49.4,23.9 56.5,27.4M46.8,26.6Q44.5,30.1 41.9,38.0M46.8,26.6Q50.7,25.4 58.1,29.2M47.9,28.1Q45.5,31.5 42.8,39.5M47.9,28.1Q51.9,26.9 59.3,31.0M48.9,29.6Q46.9,32.5 44.4,39.1M48.9,29.6Q52.4,28.7 58.5,32.2M50.0,31.1Q47.7,34.1 45.1,41.1M50.0,31.1Q53.6,30.3 60.0,34.1M51.0,32.7Q48.9,35.2 46.6,41.2M51.0,32.7Q54.1,32.1 59.6,35.5M51.9,34.4Q49.0,37.8 45.6,46.0M51.9,34.4Q56.3,33.6 63.9,38.4M52.9,36.1Q50.6,38.6 47.9,44.8M52.9,36.1Q56.2,35.6 61.9,39.3M53.8,37.8Q51.5,40.2 48.8,46.3M53.8,37.8Q57.0,37.4 62.5,41.1M54.6,39.5Q52.1,42.1 49.0,48.8M54.6,39.5Q58.3,39.2 64.2,43.4M55.5,41.3Q53.4,43.3 51.0,48.5M55.5,41.3Q58.3,41.1 62.9,44.5M56.3,43.2Q53.9,45.4 51.0,51.2M56.3,43.2Q59.5,43.0 64.7,46.9M57.0,45.0Q54.7,47.1 51.9,52.6M57.0,45.0Q60.1,44.9 65.0,48.7M57.8,47.0Q55.4,49.0 52.4,54.6M57.8,47.0Q60.9,46.9 65.9,50.8M58.5,48.9Q56.6,50.5 54.2,54.8M58.5,48.9Q61.0,48.9 64.8,52.1M59.2,50.9Q56.8,52.7 54.0,57.9M59.2,50.9Q62.1,51.0 66.6,54.8M59.8,52.9Q57.7,54.5 55.1,59.2M59.8,52.9Q62.5,53.1 66.5,56.5M60.4,55.0Q58.5,56.4 56.0,60.6M60.4,55.0Q62.8,55.2 66.5,58.4M61.0,57.1Q59.0,58.5 56.6,62.6M61.0,57.1Q63.4,57.4 66.9,60.5M61.5,59.3Q59.8,60.5 57.5,64.1M61.5,59.3Q63.7,59.5 66.8,62.4M62.1,61.5Q60.4,62.5 58.4,65.8M62.1,61.5Q64.0,61.7 66.8,64.4M62.5,63.7Q61.1,64.6 59.4,67.4M62.5,63.7Q64.2,64.0 66.6,66.2M63.0,66.0Q61.7,66.8 60.1,69.3M63.0,66.0Q64.5,66.2 66.6,68.3" stroke="#1f2f1c" stroke-width="1.7" stroke-linecap="round" fill="none"/><path d="M7.5,5.4L7.7,9.0M13.0,7.3L13.1,11.4M14.9,0.7L19.0,0.7M16.6,1.5L20.5,1.6M18.8,1.8L23.2,2.0M18.1,9.1L18.1,13.4M20.5,2.6L24.8,2.9M22.1,3.7L25.9,4.0M21.4,10.3L21.2,14.3M27.6,5.8L31.8,6.5M25.9,13.3L25.5,17.9M32.4,8.8L36.4,9.7M42.0,15.3L46.6,17.0M46.0,19.4L50.5,21.3M45.5,31.5L43.9,36.1M54.1,32.1L57.2,34.0M56.3,33.6L60.6,36.4M50.6,38.6L49.1,42.2M59.5,43.0L62.5,45.2M60.9,46.9L63.8,49.2M62.1,51.0L64.7,53.2M59.8,60.5L58.5,62.6M63.7,59.5L65.5,61.2M60.4,62.5L59.3,64.4M64.2,64.0L65.5,65.3M64.5,66.2L65.7,67.4" stroke="#5e6e44" stroke-width="0.7" stroke-linecap="round" fill="none" opacity="0.8"/><path d="M0,1 Q52,8 63,66" fill="none" stroke="#b0a878" stroke-width="0.9"/><path d="M-0.5,4.4Q-0.3,6.2 -0.2,9.9M-0.5,4.4Q0.6,2.9 4.2,2.2M0.9,4.8Q1.0,6.7 1.0,10.5M0.9,4.8Q2.1,3.4 5.8,2.9M2.3,5.3Q2.2,7.7 2.1,12.6M2.3,5.3Q3.9,3.5 8.7,3.2M3.6,5.9Q3.4,8.5 3.1,13.6M3.6,5.9Q5.4,4.0 10.6,4.0M4.8,6.5Q4.6,8.5 4.2,12.5M4.8,6.5Q6.3,5.1 10.3,5.3M6.1,7.2Q5.5,10.2 4.8,16.3M6.1,7.2Q8.4,5.2 14.5,5.8M7.2,7.9Q6.5,10.9 5.7,16.9M7.2,7.9Q9.7,6.1 15.8,6.9M8.4,8.7Q7.4,11.9 6.3,18.4M8.4,8.7Q11.1,6.9 17.6,8.1M9.5,9.6Q8.6,12.1 7.5,17.4M9.5,9.6Q11.8,8.3 17.0,9.4M10.6,10.6Q9.4,13.4 7.9,19.5M10.6,10.6Q13.3,9.1 19.4,10.7M11.6,11.6Q10.2,14.5 8.6,20.7M11.6,11.6Q14.5,10.2 20.7,12.1M12.6,12.6Q11.2,15.2 9.5,21.0M12.6,12.6Q15.4,11.5 21.0,13.5M13.6,13.7Q11.9,16.5 9.8,22.7M13.6,13.7Q16.7,12.7 22.7,15.1M14.5,14.9Q13.0,17.2 11.1,22.4M14.5,14.9Q17.1,14.1 22.2,16.4M15.4,16.2Q13.4,18.9 11.0,25.1M15.4,16.2Q18.6,15.4 24.7,18.2M16.2,17.5Q14.3,19.9 11.9,25.6M16.2,17.5Q19.2,16.9 24.7,19.7M17.0,18.9Q15.2,21.0 12.9,26.1M17.0,18.9Q19.8,18.4 24.7,21.1M17.8,20.3Q15.2,23.0 12.1,29.7M17.8,20.3Q21.5,19.9 27.9,23.6M18.5,21.8Q16.5,23.8 13.9,29.0M18.5,21.8Q21.4,21.6 26.3,24.6M19.2,23.4Q16.7,25.7 13.5,31.7M19.2,23.4Q22.6,23.2 28.3,27.0M19.8,25.0Q17.8,26.8 15.1,31.6M19.8,25.0Q22.6,25.0 27.1,28.1M20.5,26.7Q18.4,28.4 15.8,32.9M20.5,26.7Q23.1,26.7 27.4,29.8M21.0,28.5Q19.1,29.9 16.5,34.1M21.0,28.5Q23.5,28.6 27.4,31.5M21.6,30.3Q19.6,31.7 17.0,35.7M21.6,30.3Q24.0,30.5 27.8,33.4M22.1,32.2Q19.5,33.9 16.1,39.0M22.1,32.2Q25.1,32.5 29.9,36.3M22.5,34.1Q20.1,35.6 16.9,40.4M22.5,34.1Q25.4,34.5 29.7,38.1M22.9,36.1Q21.2,37.2 18.9,40.5M22.9,36.1Q24.9,36.4 28.0,39.1M23.3,38.2Q21.2,39.4 18.3,43.4M23.3,38.2Q25.7,38.6 29.4,41.9M23.7,40.3Q21.4,41.5 18.4,45.6M23.7,40.3Q26.2,40.8 29.9,44.2M24.0,42.5Q22.4,43.3 20.3,46.0M24.0,42.5Q25.7,42.9 28.2,45.2M24.2,44.8Q22.8,45.5 20.7,48.1M24.2,44.8Q25.8,45.2 28.2,47.5M24.5,47.1Q23.0,47.8 21.1,50.2M24.5,47.1Q26.0,47.5 28.2,49.7M24.7,49.5Q23.1,50.2 21.0,52.8M24.7,49.5Q26.3,49.9 28.7,52.3M24.8,51.9Q23.6,52.4 22.0,54.4M24.8,51.9Q26.0,52.3 27.8,54.2M24.9,54.4Q23.8,54.9 22.3,56.7M24.9,54.4Q26.1,54.8 27.7,56.5M25.0,57.0Q24.1,57.3 22.9,58.7M25.0,57.0Q25.9,57.3 27.2,58.7" stroke="#1f2f1c" stroke-width="1.7" stroke-linecap="round" fill="none"/><path d="M1.0,6.7L1.0,8.9M2.2,7.7L2.1,10.5M3.9,3.5L6.6,3.3M8.4,5.2L11.9,5.5M6.5,10.9L6.0,14.4M11.1,6.9L14.8,7.6M11.8,8.3L14.8,8.9M13.3,9.1L16.8,10.0M10.2,14.5L9.3,18.0M14.5,10.2L18.0,11.3M11.2,15.2L10.2,18.5M15.4,11.5L18.6,12.6M14.3,19.9L12.9,23.2M21.4,21.6L24.2,23.3M22.6,23.2L25.9,25.4M23.5,28.6L25.7,30.2M24.0,30.5L26.1,32.1M20.1,35.6L18.3,38.3M21.2,37.2L19.9,39.0M21.2,39.4L19.5,41.7M25.7,38.6L27.8,40.5M26.0,47.5L27.3,48.8M24.1,57.3L23.4,58.1M25.9,57.3L26.6,58.1" stroke="#5e6e44" stroke-width="0.7" stroke-linecap="round" fill="none" opacity="0.8"/><path d="M-2,4 Q24,10 25,57" fill="none" stroke="#a09868" stroke-width="0.9"/><path d="M104.5,-3.6Q104.3,-2.7 103.9,-0.7M104.5,-3.6Q105.3,-4.2 107.3,-4.6M106.4,-2.3Q105.9,-0.9 105.2,1.9M106.4,-2.3Q107.6,-3.0 110.5,-3.4M108.1,-0.8Q107.5,0.8 106.5,4.1M108.1,-0.8Q109.6,-1.5 113.1,-1.7M109.7,0.9Q108.9,2.5 107.7,6.0M109.7,0.9Q111.4,0.1 115.1,0.2M111.2,2.6Q110.4,4.0 109.1,7.2M111.2,2.6Q112.8,2.1 116.2,2.3M112.6,4.4Q111.6,5.9 110.1,9.1M112.6,4.4Q114.3,4.0 117.9,4.5M113.9,6.4Q112.9,7.6 111.5,10.2M113.9,6.4Q115.4,6.1 118.3,6.8M115.0,8.5Q114.2,9.4 112.9,11.6M115.0,8.5Q116.3,8.3 118.7,9.0M116.1,10.7Q115.5,11.2 114.6,12.6M116.1,10.7Q116.9,10.6 118.4,11.2M117.0,13.0Q116.5,13.4 115.7,14.5M117.0,13.0Q117.7,13.0 118.9,13.5" stroke="#1f2f1c" stroke-width="1.7" stroke-linecap="round" fill="none"/><path d="M104.3,-2.7L104.1,-1.6M107.6,-3.0L109.3,-3.2M111.4,0.1L113.5,0.2M110.4,4.0L109.6,5.8M114.3,4.0L116.4,4.3M112.9,7.6L112.1,9.1M115.4,6.1L117.1,6.5M114.2,9.4L113.5,10.6" stroke="#5e6e44" stroke-width="0.7" stroke-linecap="round" fill="none" opacity="0.8"/><path d="M104,-4 Q113,2 117,13" fill="none" stroke="#8a8a5a" stroke-width="0.9"/><path d="M144.5,-2.8Q144.3,-1.7 144.1,0.5M144.5,-2.8Q145.3,-3.5 147.3,-4.3M146.6,-1.6Q146.4,0.0 146.0,3.3M146.6,-1.6Q147.9,-2.7 151.0,-3.7M148.7,-0.4Q148.3,1.6 147.7,5.6M148.7,-0.4Q150.3,-1.6 154.2,-2.6M150.7,1.0Q150.3,2.5 149.8,5.6M150.7,1.0Q152.0,0.0 155.1,-0.7M152.7,2.4Q152.1,4.0 151.4,7.5M152.7,2.4Q154.2,1.4 157.6,0.8M154.5,3.8Q154.0,5.2 153.3,8.0M154.5,3.8Q155.8,3.1 158.6,2.8M156.3,5.4Q155.8,6.5 155.2,8.8M156.3,5.4Q157.4,4.8 159.8,4.6M158.0,7.0Q157.8,7.5 157.5,8.5M158.0,7.0Q158.5,6.8 159.5,6.8" stroke="#1f2f1c" stroke-width="1.7" stroke-linecap="round" fill="none"/><path d="M145.3,-3.5L146.5,-4.0M146.4,0.0L146.1,1.9M148.3,1.6L148.0,3.9M150.3,-1.6L152.5,-2.2M150.3,2.5L150.0,4.3M152.0,0.0L153.8,-0.4M155.8,3.1L157.4,2.9M157.4,4.8L158.7,4.7" stroke="#5e6e44" stroke-width="0.7" stroke-linecap="round" fill="none" opacity="0.8"/><path d="M144,-3 Q152,1 158,7" fill="none" stroke="#8a8a5a" stroke-width="0.9"/></g>
</svg></div>

<!-- P6 boat -->
<div class="ph" style="left:669px;top:553px;width:158px;height:94px">
<svg width="158" height="94" viewBox="0 0 158 94">
<defs>
<linearGradient id="p6sky" x1="0" y1="0" x2="0" y2="1"><stop offset="0" stop-color="#2e6ed0"/><stop offset="1" stop-color="#80a8dc"/></linearGradient>
<linearGradient id="p6mt" x1="0" y1="0" x2="1" y2="0"><stop offset="0" stop-color="#56644e"/><stop offset="1" stop-color="#76826a"/></linearGradient>
<filter id="g1"><feGaussianBlur stdDeviation="0.8"/></filter>
<filter id="g3"><feGaussianBlur stdDeviation="1.1"/></filter>
<filter id="g2"><feGaussianBlur stdDeviation="1.8"/></filter>
<filter id="p6t" x="0" y="0" width="100%" height="100%"><feTurbulence type="fractalNoise" baseFrequency="0.15 0.1" numOctaves="2" seed="14"/>
<feColorMatrix type="matrix" values="0 0 0 0 0.75  0 0 0 0 0.78  0 0 0 0 0.7  2.6 0 0 0 -1.3"/><feGaussianBlur stdDeviation="0.8"/></filter>
<filter id="p6w" x="0" y="0" width="100%" height="100%"><feTurbulence type="fractalNoise" baseFrequency="0.25 0.1" numOctaves="2" seed="17"/>
<feColorMatrix type="matrix" values="0 0 0 0 0.25  0 0 0 0 0.28  0 0 0 0 0.32  2.2 0 0 0 -0.9"/><feGaussianBlur stdDeviation="0.8"/></filter>
<clipPath id="p6rm"><path d="M88,52 C96,40 110,28 130,16 C145,8 152,3 158,0 L158,62 L88,60Z"/></clipPath>
<clipPath id="p6wk"><path d="M125,50 L158,54 L158,94 L125,94Z"/></clipPath>
</defs>
<rect width="158" height="94" fill="url(#p6sky)"/>
<g filter="url(#g2)" fill="#eaf0f8">
<ellipse cx="100" cy="12" rx="34" ry="7"/><ellipse cx="84" cy="22" rx="16" ry="4"/><ellipse cx="66" cy="7" rx="10" ry="4" opacity="0.8"/><ellipse cx="128" cy="6" rx="14" ry="4" opacity="0.7"/>
</g>
<path d="M88,52 C96,40 110,28 130,16 C145,8 152,3 158,0 L158,62 L88,60Z" fill="url(#p6mt)" filter="url(#g1)"/>
<g clip-path="url(#p6rm)"><rect x="88" y="0" width="70" height="62" filter="url(#p6t)" opacity="0.4"/></g>
<path d="M38,24 C44,18 50,16 56,18 C66,24 76,36 90,50 L90,56 L38,58Z" fill="#2a2c34" filter="url(#g1)"/>
<path d="M80,46 L96,46 L96,54 L80,54Z" fill="#8aa0b8" opacity="0.7" filter="url(#g1)"/>
<path d="M0,0 L10,0 L14,8 L27,22 L20,34 L0,40Z" fill="#16181e" filter="url(#g1)"/>
<path d="M2,16 C6,14 14,16 19,20 L19,23 C14,22 6,20 2,19Z" fill="#d8dce0" filter="url(#g1)"/>
<path d="M14,9 C18,6 26,7 28,11 C26,15 18,15 14,12Z" fill="#c8c4bc" filter="url(#g1)"/>
<path d="M0,44 L40,30 L42,60 L0,62Z" fill="#24262c" filter="url(#g1)"/>
<path d="M0,62 L20,54 L90,52 L118,54 L118,94 L0,94Z" fill="#46464e" filter="url(#g1)"/>
<path d="M0,34 L50,19 L53,22 L40,31 L14,52 L0,54Z" fill="#b8bcc4" filter="url(#g1)"/>
<path d="M0,34 L50,19 L51,22 L0,41Z" fill="#eef1f5" filter="url(#g1)"/>
<rect x="38.5" y="0" width="5" height="62" fill="#dde2ea" filter="url(#g1)"/>
<rect x="48" y="0" width="1" height="30" fill="#e8ecf0" opacity="0.8"/>
<g filter="url(#g3)">
<ellipse cx="25.6" cy="65.8" rx="3.0" ry="3.4" fill="#e8e0e0"/><ellipse cx="92.8" cy="68.2" rx="3.0" ry="3.5" fill="#c03a3a"/><ellipse cx="8.3" cy="59.4" rx="2.1" ry="4.6" fill="#2e2a30"/><ellipse cx="32.9" cy="56.7" rx="2.9" ry="5.0" fill="#2a2226"/><ellipse cx="90.5" cy="60.1" rx="2.1" ry="3.7" fill="#b84848"/><ellipse cx="61.2" cy="54.3" rx="2.0" ry="4.5" fill="#8a3a80"/><ellipse cx="17.5" cy="68.2" rx="2.9" ry="4.1" fill="#2a2226"/><ellipse cx="44.7" cy="61.7" rx="3.3" ry="3.9" fill="#c03a3a"/><ellipse cx="95.8" cy="53.5" rx="2.4" ry="4.9" fill="#d86a3a"/><ellipse cx="103.7" cy="67.1" rx="2.2" ry="4.0" fill="#3a2e2e"/><ellipse cx="96.5" cy="56.0" rx="3.8" ry="3.8" fill="#c03a3a"/><ellipse cx="47.1" cy="61.0" rx="2.6" ry="4.0" fill="#2e2a30"/><ellipse cx="36.4" cy="68.7" rx="3.4" ry="5.0" fill="#c03a3a"/><ellipse cx="61.1" cy="61.8" rx="3.1" ry="3.6" fill="#d86a3a"/><ellipse cx="112.9" cy="54.3" rx="3.3" ry="4.7" fill="#c03a3a"/><ellipse cx="43.6" cy="67.2" rx="2.5" ry="3.3" fill="#e8e0e0"/><ellipse cx="106.8" cy="55.5" rx="2.7" ry="4.4" fill="#2e2a30"/><ellipse cx="80.3" cy="70.0" rx="2.8" ry="5.0" fill="#d86a3a"/><ellipse cx="110.9" cy="63.8" rx="3.0" ry="3.8" fill="#8a3a80"/><ellipse cx="34.5" cy="69.5" rx="3.1" ry="3.9" fill="#c03a3a"/><ellipse cx="51.6" cy="66.8" rx="3.7" ry="3.1" fill="#2a2226"/><ellipse cx="35.6" cy="57.8" rx="2.5" ry="3.8" fill="#2e2a30"/><ellipse cx="101.1" cy="64.9" rx="4.0" ry="4.5" fill="#c03a3a"/><ellipse cx="59.3" cy="57.0" rx="2.1" ry="3.4" fill="#b84848"/><ellipse cx="97.7" cy="67.9" rx="3.2" ry="3.9" fill="#8a3a80"/><ellipse cx="70.2" cy="69.0" rx="2.3" ry="4.2" fill="#e8e0e0"/><path d="M58,82 L100,72 L114,80 L114,94 L58,94Z" fill="#b8b8c0"/>
<path d="M80,94 L112,82 L116,94Z" fill="#3a4aa8" opacity="0.8"/>
<path d="M60,60 C70,56 90,54 100,58 L98,72 C88,74 70,76 62,74Z" fill="#d0603c"/>
<ellipse cx="68" cy="62" rx="4" ry="6" fill="#c03030"/>
<ellipse cx="78" cy="66" rx="5" ry="9" fill="#2a2024"/>
<ellipse cx="88" cy="60" rx="4" ry="6" fill="#3a2a2a"/>
<ellipse cx="60" cy="64" rx="4" ry="4" fill="#3a3030"/>
<ellipse cx="96" cy="62" rx="4" ry="5" fill="#c84040"/>
<ellipse cx="106" cy="66" rx="6" ry="5" fill="#d05050"/>
<ellipse cx="103" cy="74" rx="8" ry="8" fill="#8a3aa0"/>
<ellipse cx="30" cy="72" rx="12" ry="11" fill="#241c20"/>
<ellipse cx="50" cy="79" rx="9" ry="6" fill="#e0e0e6"/>
<path d="M4,94 C6,84 18,80 32,81 C46,82 54,88 56,94Z" fill="#c02a5c"/>
<ellipse cx="22" cy="62" rx="4" ry="5" fill="#4a3a3a"/>
<ellipse cx="12" cy="66" rx="5" ry="6" fill="#3a3030"/>
</g>
<path d="M116,48 L123,44 L127,94 L118,94Z" fill="#e2e6ec" filter="url(#g1)"/>
<path d="M125,50 L158,54 L158,94 L125,94Z" fill="#9aa2ac" filter="url(#g1)"/>
<g clip-path="url(#p6wk)"><rect x="125" y="50" width="33" height="44" filter="url(#p6w)"/></g>
<path d="M127,52 C134,62 141,76 148,94 L142,94 C136,78 131,64 127,52Z" fill="#3a4048" opacity="0.7" filter="url(#g1)"/>
</svg></div>

<div class="l" style="left:284.5px;top:73.32px;font-family:'Liberation Serif', serif;font-size:19.8px;color:#474856;letter-spacing:1.01px;">I<span style="font-size:14.4px">NHALT</span></div><div class="l" style="right:1005.6px;top:157.62px;font-family:'Liberation Serif', serif;font-size:19.8px;color:#474856;letter-spacing:-1.6px;">12</div><div class="l" style="left:283.5px;top:157.52px;font-family:'Liberation Serif', serif;font-size:19.8px;color:#474856;letter-spacing:1.35px;">A<span style="font-size:14.4px">OTEAROA </span>–</div><div class="l" style="left:283.5px;top:178.82px;font-family:'Liberation Serif', serif;font-size:19.8px;color:#474856;letter-spacing:1.5663636363636309px;"><span style="font-size:14.4px">DAS </span>L<span style="font-size:14.4px">AND DER </span>G<span style="font-size:14.4px">EGENSÄTZE</span></div><div class="l" style="right:1002.7px;top:346.82px;font-family:'Liberation Serif', serif;font-size:19.8px;color:#474856;letter-spacing:1.3px;">22</div><div class="l" style="left:283.5px;top:346.82px;font-family:'Liberation Serif', serif;font-size:19.8px;color:#474856;letter-spacing:1.656875000000002px;">D<span style="font-size:14.4px">IE HEIMLICHE UND</span></div><div class="l" style="left:283.5px;top:367.92px;font-family:'Liberation Serif', serif;font-size:19.8px;color:#474856;letter-spacing:1.4000000000000001px;"><span style="font-size:14.4px">DIE RICHTIGE </span>H<span style="font-size:14.4px">AUPTSTADT </span>–</div><div class="l" style="left:283.5px;top:389.02px;font-family:'Liberation Serif', serif;font-size:19.8px;color:#474856;letter-spacing:1.4190909090909118px;">A<span style="font-size:14.4px">UCKLAND UND </span>W<span style="font-size:14.4px">ELLINGTON</span></div><div class="l" style="left:283.5px;top:422.74px;font-family:'Liberation Sans', sans-serif;font-size:12.3px;color:#373844;letter-spacing:0.15px;font-weight:bold;">Seite 32</div><div class="l" style="left:283.5px;top:438.34px;font-family:'Liberation Sans', sans-serif;font-size:12.3px;color:#373844;letter-spacing:0.018292682926829257px;font-weight:bold;">Von Frauenspersonen und Menschenfressern –</div><div class="l" style="left:283.5px;top:453.94px;font-family:'Liberation Sans', sans-serif;font-size:12.3px;color:#373844;letter-spacing:0.15px;font-weight:bold;">Captain James Cook</div><div class="l" style="right:1002.7px;top:536.02px;font-family:'Liberation Serif', serif;font-size:19.8px;color:#474856;letter-spacing:1.3px;">44</div><div class="l" style="left:283.5px;top:536.02px;font-family:'Liberation Serif', serif;font-size:19.8px;color:#474856;letter-spacing:1.625px;">Z<span style="font-size:14.4px">WISCHEN </span>C<span style="font-size:14.4px">OROMANDEL</span></div><div class="l" style="left:283.5px;top:557.12px;font-family:'Liberation Serif', serif;font-size:19.8px;color:#474856;letter-spacing:1.55px;"><span style="font-size:14.4px">UND </span>C<span style="font-size:14.4px">APE </span>R<span style="font-size:14.4px">EINGA </span>–</div><div class="l" style="left:283.5px;top:578.22px;font-family:'Liberation Serif', serif;font-size:19.8px;color:#474856;letter-spacing:1.7545454545454546px;"><span style="font-size:14.4px">DER SUBTROPISCHE </span>N<span style="font-size:14.4px">ORDEN</span></div><div class="l" style="right:450.70000000000005px;top:157.52px;font-family:'Liberation Serif', serif;font-size:19.8px;color:#474856;letter-spacing:-1.2px;">58</div><div class="l" style="left:838px;top:157.52px;font-family:'Liberation Serif', serif;font-size:19.8px;color:#474856;letter-spacing:1.5919999999999959px;">D<span style="font-size:14.4px">AMPFENDE </span>E<span style="font-size:14.4px">RDE </span>–</div><div class="l" style="left:838px;top:178.82px;font-family:'Liberation Serif', serif;font-size:19.8px;color:#474856;letter-spacing:1.2850000000000137px;">G<span style="font-size:14.4px">EYSIRE UND </span>V<span style="font-size:14.4px">ULKANE</span></div><div class="l" style="left:838px;top:212.34px;font-family:'Liberation Sans', sans-serif;font-size:12.3px;color:#373844;letter-spacing:0.15px;font-weight:bold;">Seite 80</div><div class="l" style="left:838px;top:227.94px;font-family:'Liberation Sans', sans-serif;font-size:12.3px;color:#373844;letter-spacing:0.17302325581395633px;font-weight:bold;">Die zahlenmäßig größte Einwanderungsgruppe –</div><div class="l" style="left:838px;top:243.54px;font-family:'Liberation Sans', sans-serif;font-size:12.3px;color:#373844;letter-spacing:0.15px;font-weight:bold;">Neuseelands Schafe</div><div class="l" style="left:838px;top:275.94px;font-family:'Liberation Sans', sans-serif;font-size:12.3px;color:#373844;letter-spacing:0.15px;font-weight:bold;">Seite 92</div><div class="l" style="left:838px;top:291.34px;font-family:'Liberation Sans', sans-serif;font-size:12.3px;color:#373844;letter-spacing:0.15px;font-weight:bold;">Einwanderer vor den Europäern –</div><div class="l" style="left:838px;top:306.94px;font-family:'Liberation Sans', sans-serif;font-size:12.3px;color:#373844;letter-spacing:0.15px;font-weight:bold;">die Geschichte der Maori</div><div class="l" style="right:447.5px;top:346.62px;font-family:'Liberation Serif', serif;font-size:19.8px;color:#474856;letter-spacing:2px;">118</div><div class="l" style="left:838px;top:346.62px;font-family:'Liberation Serif', serif;font-size:19.8px;color:#474856;letter-spacing:1.3209090909090855px;">W<span style="font-size:14.4px">EIN, </span>W<span style="font-size:14.4px">HISKY UND </span>W<span style="font-size:14.4px">ALE </span>–</div><div class="l" style="left:838px;top:367.72px;font-family:'Liberation Serif', serif;font-size:19.8px;color:#474856;letter-spacing:1.4299999999999897px;"><span style="font-size:14.4px">AUF </span>S<span style="font-size:14.4px">OUTHLAND</span></div><div class="l" style="left:838px;top:401.74px;font-family:'Liberation Sans', sans-serif;font-size:12.3px;color:#373844;letter-spacing:0.15px;font-weight:bold;">Seite 132</div><div class="l" style="left:838px;top:417.34px;font-family:'Liberation Sans', sans-serif;font-size:12.3px;color:#373844;letter-spacing:0.15px;font-weight:bold;">Spitzenprodukt vom anderen Ende der Welt –</div><div class="l" style="left:838px;top:432.94px;font-family:'Liberation Sans', sans-serif;font-size:12.3px;color:#373844;letter-spacing:0.15px;font-weight:bold;">neuseeländischer Wein</div><div class="l" style="left:838px;top:465.14px;font-family:'Liberation Sans', sans-serif;font-size:12.3px;color:#373844;letter-spacing:0.15px;font-weight:bold;">Seite 158</div><div class="l" style="left:838px;top:480.74px;font-family:'Liberation Sans', sans-serif;font-size:12.3px;color:#373844;letter-spacing:0.15px;font-weight:bold;">Wahre Perlen –</div><div class="l" style="left:838px;top:496.34px;font-family:'Liberation Sans', sans-serif;font-size:12.3px;color:#373844;letter-spacing:0.15px;font-weight:bold;">die »Kleinen« der neuseeländischen Inseln</div><div class="l" style="right:447.70000000000005px;top:536.02px;font-family:'Liberation Serif', serif;font-size:19.8px;color:#474856;letter-spacing:1.8px;">184</div><div class="l" style="left:838px;top:536.02px;font-family:'Liberation Serif', serif;font-size:19.8px;color:#474856;letter-spacing:1.4937500000000001px;">G<span style="font-size:14.4px">LETSCHER, </span>F<span style="font-size:14.4px">JORDE</span></div><div class="l" style="left:838px;top:557.12px;font-family:'Liberation Serif', serif;font-size:19.8px;color:#474856;letter-spacing:1.6785714285714286px;"><span style="font-size:14.4px">UND </span>R<span style="font-size:14.4px">EGENWALD </span>–</div><div class="l" style="left:838px;top:578.22px;font-family:'Liberation Serif', serif;font-size:19.8px;color:#474856;letter-spacing:1.7915789473684276px;">N<span style="font-size:14.4px">EUSEELANDS </span>N<span style="font-size:14.4px">ORWEGEN</span></div><div class="l" style="left:838px;top:611.94px;font-family:'Liberation Sans', sans-serif;font-size:12.3px;color:#373844;letter-spacing:0.15px;font-weight:bold;">Seite 206</div><div class="l" style="left:838px;top:627.54px;font-family:'Liberation Sans', sans-serif;font-size:12.3px;color:#373844;letter-spacing:0.15px;font-weight:bold;">Naturparks und Abenteuersport –</div><div class="l" style="left:838px;top:643.14px;font-family:'Liberation Sans', sans-serif;font-size:12.3px;color:#373844;letter-spacing:0.15px;font-weight:bold;">Outdoorparadies Südinsel</div><div class="l" style="left:838px;top:700.74px;font-family:'Liberation Sans', sans-serif;font-size:12.3px;color:#373844;letter-spacing:0.15px;font-weight:bold;">Seite 222:</div><div class="l" style="left:920.7px;top:700.74px;font-family:'Liberation Sans', sans-serif;font-size:12.3px;color:#373844;letter-spacing:0.15px;font-weight:bold;">Register</div><div class="l" style="left:838px;top:716.54px;font-family:'Liberation Sans', sans-serif;font-size:12.3px;color:#373844;letter-spacing:0.15px;font-weight:bold;">Seite 223:</div><div class="l" style="left:920.7px;top:716.54px;font-family:'Liberation Sans', sans-serif;font-size:12.3px;color:#373844;letter-spacing:0.15px;font-weight:bold;">Karte</div><div class="l" style="left:838px;top:732.34px;font-family:'Liberation Sans', sans-serif;font-size:12.3px;color:#373844;letter-spacing:0.15px;font-weight:bold;">Seite 224:</div><div class="l" style="left:920.7px;top:732.34px;font-family:'Liberation Sans', sans-serif;font-size:12.3px;color:#373844;letter-spacing:0.15px;font-weight:bold;">Impressum</div><div class="l" style="right:1171.0px;top:193.16px;font-family:'Liberation Serif', serif;font-size:9.6px;color:#3a3b47;letter-spacing:0.15px;font-style:italic;transform:scaleX(0.82);transform-origin:right 0;">Erste Seite:</div><div class="l" style="right:1171.0px;top:203.66px;font-family:'Liberation Serif', serif;font-size:9.6px;color:#3a3b47;letter-spacing:0.15px;font-style:italic;transform:scaleX(0.82);transform-origin:right 0;">Zu den schönsten</div><div class="l" style="right:1171.0px;top:214.16px;font-family:'Liberation Serif', serif;font-size:9.6px;color:#3a3b47;letter-spacing:0.15px;font-style:italic;transform:scaleX(0.82);transform-origin:right 0;">Wanderwegen des</div><div class="l" style="right:1171.0px;top:224.66px;font-family:'Liberation Serif', serif;font-size:9.6px;color:#3a3b47;letter-spacing:0.15px;font-style:italic;transform:scaleX(0.82);transform-origin:right 0;">Mount Aspiring</div><div class="l" style="right:1171.0px;top:235.16px;font-family:'Liberation Serif', serif;font-size:9.6px;color:#3a3b47;letter-spacing:0.15px;font-style:italic;transform:scaleX(0.82);transform-origin:right 0;">National Park gehört</div><div class="l" style="right:1171.0px;top:245.66px;font-family:'Liberation Serif', serif;font-size:9.6px;color:#3a3b47;letter-spacing:0.15px;font-style:italic;transform:scaleX(0.82);transform-origin:right 0;">der Roaring Billy</div><div class="l" style="right:1171.0px;top:256.16px;font-family:'Liberation Serif', serif;font-size:9.6px;color:#3a3b47;letter-spacing:0.15px;font-style:italic;transform:scaleX(0.82);transform-origin:right 0;">Falls Walk, der bei</div><div class="l" style="right:1171.0px;top:266.66px;font-family:'Liberation Serif', serif;font-size:9.6px;color:#3a3b47;letter-spacing:0.15px;font-style:italic;transform:scaleX(0.82);transform-origin:right 0;">Wanaka auf halber</div><div class="l" style="right:1171.0px;top:277.16px;font-family:'Liberation Serif', serif;font-size:9.6px;color:#3a3b47;letter-spacing:0.15px;font-style:italic;transform:scaleX(0.82);transform-origin:right 0;">Strecke zwischen</div><div class="l" style="right:1171.0px;top:287.66px;font-family:'Liberation Serif', serif;font-size:9.6px;color:#3a3b47;letter-spacing:0.15px;font-style:italic;transform:scaleX(0.82);transform-origin:right 0;">Westküste und Haast</div><div class="l" style="right:1171.0px;top:298.16px;font-family:'Liberation Serif', serif;font-size:9.6px;color:#3a3b47;letter-spacing:0.15px;font-style:italic;transform:scaleX(0.82);transform-origin:right 0;">Pass durch Regen-</div><div class="l" style="right:1171.0px;top:308.66px;font-family:'Liberation Serif', serif;font-size:9.6px;color:#3a3b47;letter-spacing:0.15px;font-style:italic;transform:scaleX(0.82);transform-origin:right 0;">wälder führt. Riesen-</div><div class="l" style="right:1171.0px;top:319.16px;font-family:'Liberation Serif', serif;font-size:9.6px;color:#3a3b47;letter-spacing:0.15px;font-style:italic;transform:scaleX(0.82);transform-origin:right 0;">farne und Urwald-</div><div class="l" style="right:1171.0px;top:329.66px;font-family:'Liberation Serif', serif;font-size:9.6px;color:#3a3b47;letter-spacing:0.15px;font-style:italic;transform:scaleX(0.82);transform-origin:right 0;">riesen bilden eine</div><div class="l" style="right:1171.0px;top:340.16px;font-family:'Liberation Serif', serif;font-size:9.6px;color:#3a3b47;letter-spacing:0.15px;font-style:italic;transform:scaleX(0.82);transform-origin:right 0;">dichte Urwaldkulisse.</div><div class="l" style="right:1171.0px;top:361.16px;font-family:'Liberation Serif', serif;font-size:9.6px;color:#3a3b47;letter-spacing:0.15px;font-style:italic;transform:scaleX(0.82);transform-origin:right 0;">Seite 2/3:</div><div class="l" style="right:1171.0px;top:371.66px;font-family:'Liberation Serif', serif;font-size:9.6px;color:#3a3b47;letter-spacing:0.15px;font-style:italic;transform:scaleX(0.82);transform-origin:right 0;">Zuweilen müssen</div><div class="l" style="right:1171.0px;top:382.16px;font-family:'Liberation Serif', serif;font-size:9.6px;color:#3a3b47;letter-spacing:0.15px;font-style:italic;transform:scaleX(0.82);transform-origin:right 0;">Hütehunde</div><div class="l" style="right:1171.0px;top:392.66px;font-family:'Liberation Serif', serif;font-size:9.6px;color:#3a3b47;letter-spacing:0.15px;font-style:italic;transform:scaleX(0.82);transform-origin:right 0;">Herden von über</div><div class="l" style="right:1171.0px;top:403.16px;font-family:'Liberation Serif', serif;font-size:9.6px;color:#3a3b47;letter-spacing:0.15px;font-style:italic;transform:scaleX(0.82);transform-origin:right 0;">10 000 Schafen in</div><div class="l" style="right:1171.0px;top:413.66px;font-family:'Liberation Serif', serif;font-size:9.6px;color:#3a3b47;letter-spacing:0.15px;font-style:italic;transform:scaleX(0.82);transform-origin:right 0;">Schach halten. Ins-</div><div class="l" style="right:1171.0px;top:424.16px;font-family:'Liberation Serif', serif;font-size:9.6px;color:#3a3b47;letter-spacing:0.15px;font-style:italic;transform:scaleX(0.82);transform-origin:right 0;">gesamt zählen die</div><div class="l" style="right:1171.0px;top:434.66px;font-family:'Liberation Serif', serif;font-size:9.6px;color:#3a3b47;letter-spacing:0.15px;font-style:italic;transform:scaleX(0.82);transform-origin:right 0;">Wollträger, die wie</div><div class="l" style="right:1171.0px;top:445.16px;font-family:'Liberation Serif', serif;font-size:9.6px;color:#3a3b47;letter-spacing:0.15px;font-style:italic;transform:scaleX(0.82);transform-origin:right 0;">hier nahe der Inland</div><div class="l" style="right:1171.0px;top:455.66px;font-family:'Liberation Serif', serif;font-size:9.6px;color:#3a3b47;letter-spacing:0.15px;font-style:italic;transform:scaleX(0.82);transform-origin:right 0;">Scenic Route bei</div><div class="l" style="right:1171.0px;top:466.16px;font-family:'Liberation Serif', serif;font-size:9.6px;color:#3a3b47;letter-spacing:0.15px;font-style:italic;transform:scaleX(0.82);transform-origin:right 0;">Glentunnel Neu-</div><div class="l" style="right:1171.0px;top:476.66px;font-family:'Liberation Serif', serif;font-size:9.6px;color:#3a3b47;letter-spacing:0.15px;font-style:italic;transform:scaleX(0.82);transform-origin:right 0;">seelands endlose</div><div class="l" style="right:1171.0px;top:487.16px;font-family:'Liberation Serif', serif;font-size:9.6px;color:#3a3b47;letter-spacing:0.15px;font-style:italic;transform:scaleX(0.82);transform-origin:right 0;">Weidegebiete bevöl-</div><div class="l" style="right:1171.0px;top:497.66px;font-family:'Liberation Serif', serif;font-size:9.6px;color:#3a3b47;letter-spacing:0.15px;font-style:italic;transform:scaleX(0.82);transform-origin:right 0;">kern, noch rund</div><div class="l" style="right:1171.0px;top:508.16px;font-family:'Liberation Serif', serif;font-size:9.6px;color:#3a3b47;letter-spacing:0.15px;font-style:italic;transform:scaleX(0.82);transform-origin:right 0;">35 Millionen Tiere.</div><div class="l" style="right:1171.0px;top:529.16px;font-family:'Liberation Serif', serif;font-size:9.6px;color:#3a3b47;letter-spacing:0.15px;font-style:italic;transform:scaleX(0.82);transform-origin:right 0;">Seite 4/5:</div><div class="l" style="right:1171.0px;top:539.66px;font-family:'Liberation Serif', serif;font-size:9.6px;color:#3a3b47;letter-spacing:0.15px;font-style:italic;transform:scaleX(0.82);transform-origin:right 0;">Die ehemalige und</div><div class="l" style="right:1171.0px;top:550.16px;font-family:'Liberation Serif', serif;font-size:9.6px;color:#3a3b47;letter-spacing:0.15px;font-style:italic;transform:scaleX(0.82);transform-origin:right 0;">heimliche Hauptstadt</div><div class="l" style="right:1171.0px;top:560.66px;font-family:'Liberation Serif', serif;font-size:9.6px;color:#3a3b47;letter-spacing:0.15px;font-style:italic;transform:scaleX(0.82);transform-origin:right 0;">der Kiwis beherbergt</div><div class="l" style="right:1171.0px;top:571.16px;font-family:'Liberation Serif', serif;font-size:9.6px;color:#3a3b47;letter-spacing:0.15px;font-style:italic;transform:scaleX(0.82);transform-origin:right 0;">über anderthalb</div><div class="l" style="right:1171.0px;top:581.66px;font-family:'Liberation Serif', serif;font-size:9.6px;color:#3a3b47;letter-spacing:0.15px;font-style:italic;transform:scaleX(0.82);transform-origin:right 0;">Millionen Einwohner,</div><div class="l" style="right:1171.0px;top:592.16px;font-family:'Liberation Serif', serif;font-size:9.6px;color:#3a3b47;letter-spacing:0.15px;font-style:italic;transform:scaleX(0.82);transform-origin:right 0;">ist wirtschaftliches</div><div class="l" style="right:1171.0px;top:602.66px;font-family:'Liberation Serif', serif;font-size:9.6px;color:#3a3b47;letter-spacing:0.15px;font-style:italic;transform:scaleX(0.82);transform-origin:right 0;">und kulturelles</div><div class="l" style="right:1171.0px;top:613.16px;font-family:'Liberation Serif', serif;font-size:9.6px;color:#3a3b47;letter-spacing:0.15px;font-style:italic;transform:scaleX(0.82);transform-origin:right 0;">Zentrum, Schmelz-</div><div class="l" style="right:1171.0px;top:623.66px;font-family:'Liberation Serif', serif;font-size:9.6px;color:#3a3b47;letter-spacing:0.15px;font-style:italic;transform:scaleX(0.82);transform-origin:right 0;">tiegel vieler Rassen,</div><div class="l" style="right:1171.0px;top:634.16px;font-family:'Liberation Serif', serif;font-size:9.6px;color:#3a3b47;letter-spacing:0.15px;font-style:italic;transform:scaleX(0.82);transform-origin:right 0;">Drehkreuz für Luft-</div><div class="l" style="right:1171.0px;top:644.66px;font-family:'Liberation Serif', serif;font-size:9.6px;color:#3a3b47;letter-spacing:0.15px;font-style:italic;transform:scaleX(0.82);transform-origin:right 0;">und Schiffsverkehr</div><div class="l" style="right:1171.0px;top:655.16px;font-family:'Liberation Serif', serif;font-size:9.6px;color:#3a3b47;letter-spacing:0.15px;font-style:italic;transform:scaleX(0.82);transform-origin:right 0;">und überhaupt, eine</div><div class="l" style="right:1171.0px;top:665.66px;font-family:'Liberation Serif', serif;font-size:9.6px;color:#3a3b47;letter-spacing:0.15px;font-style:italic;transform:scaleX(0.82);transform-origin:right 0;">richtige, weltstädtische</div><div class="l" style="right:1171.0px;top:676.16px;font-family:'Liberation Serif', serif;font-size:9.6px;color:#3a3b47;letter-spacing:0.15px;font-style:italic;transform:scaleX(0.82);transform-origin:right 0;">und glitzernde</div><div class="l" style="right:1171.0px;top:686.66px;font-family:'Liberation Serif', serif;font-size:9.6px;color:#3a3b47;letter-spacing:0.15px;font-style:italic;transform:scaleX(0.82);transform-origin:right 0;">Metropole. Was am</div><div class="l" style="right:1171.0px;top:697.16px;font-family:'Liberation Serif', serif;font-size:9.6px;color:#3a3b47;letter-spacing:0.15px;font-style:italic;transform:scaleX(0.82);transform-origin:right 0;">trefflichsten zum</div><div class="l" style="right:1171.0px;top:707.66px;font-family:'Liberation Serif', serif;font-size:9.6px;color:#3a3b47;letter-spacing:0.15px;font-style:italic;transform:scaleX(0.82);transform-origin:right 0;">Ausdruck kommt,</div><div class="l" style="right:1171.0px;top:718.16px;font-family:'Liberation Serif', serif;font-size:9.6px;color:#3a3b47;letter-spacing:0.15px;font-style:italic;transform:scaleX(0.82);transform-origin:right 0;">wenn in Auckland die</div><div class="l" style="right:1171.0px;top:728.66px;font-family:'Liberation Serif', serif;font-size:9.6px;color:#3a3b47;letter-spacing:0.15px;font-style:italic;transform:scaleX(0.82);transform-origin:right 0;">Lichter angehen.</div><div class="l" style="left:1173.1px;top:372.06px;font-family:'Liberation Serif', serif;font-size:9.6px;color:#3a3b47;letter-spacing:0.15px;font-style:italic;transform:scaleX(0.82);transform-origin:left 0;">Seite 8/9:</div><div class="l" style="left:1173.1px;top:382.56px;font-family:'Liberation Serif', serif;font-size:9.6px;color:#3a3b47;letter-spacing:0.15px;font-style:italic;transform:scaleX(0.82);transform-origin:left 0;">Eine einzigartige land-</div><div class="l" style="left:1173.1px;top:393.06px;font-family:'Liberation Serif', serif;font-size:9.6px;color:#3a3b47;letter-spacing:0.15px;font-style:italic;transform:scaleX(0.82);transform-origin:left 0;">schaftliche Vielfalt</div><div class="l" style="left:1173.1px;top:403.56px;font-family:'Liberation Serif', serif;font-size:9.6px;color:#3a3b47;letter-spacing:0.15px;font-style:italic;transform:scaleX(0.82);transform-origin:left 0;">bietet der Tongariro</div><div class="l" style="left:1173.1px;top:414.06px;font-family:'Liberation Serif', serif;font-size:9.6px;color:#3a3b47;letter-spacing:0.15px;font-style:italic;transform:scaleX(0.82);transform-origin:left 0;">National Park süd-</div><div class="l" style="left:1173.1px;top:424.56px;font-family:'Liberation Serif', serif;font-size:9.6px;color:#3a3b47;letter-spacing:0.15px;font-style:italic;transform:scaleX(0.82);transform-origin:left 0;">lich des Lake Taupo</div><div class="l" style="left:1173.1px;top:435.06px;font-family:'Liberation Serif', serif;font-size:9.6px;color:#3a3b47;letter-spacing:0.15px;font-style:italic;transform:scaleX(0.82);transform-origin:left 0;">mit vulkanischen</div><div class="l" style="left:1173.1px;top:445.56px;font-family:'Liberation Serif', serif;font-size:9.6px;color:#3a3b47;letter-spacing:0.15px;font-style:italic;transform:scaleX(0.82);transform-origin:left 0;">Massiven, gekrönt</div><div class="l" style="left:1173.1px;top:456.06px;font-family:'Liberation Serif', serif;font-size:9.6px;color:#3a3b47;letter-spacing:0.15px;font-style:italic;transform:scaleX(0.82);transform-origin:left 0;">von rauchenden</div><div class="l" style="left:1173.1px;top:466.56px;font-family:'Liberation Serif', serif;font-size:9.6px;color:#3a3b47;letter-spacing:0.15px;font-style:italic;transform:scaleX(0.82);transform-origin:left 0;">Kratern, Wasser-</div><div class="l" style="left:1173.1px;top:477.06px;font-family:'Liberation Serif', serif;font-size:9.6px;color:#3a3b47;letter-spacing:0.15px;font-style:italic;transform:scaleX(0.82);transform-origin:left 0;">fällen, die in die Tiefe</div><div class="l" style="left:1173.1px;top:487.56px;font-family:'Liberation Serif', serif;font-size:9.6px;color:#3a3b47;letter-spacing:0.15px;font-style:italic;transform:scaleX(0.82);transform-origin:left 0;">stürzen, und weiten,</div><div class="l" style="left:1173.1px;top:498.06px;font-family:'Liberation Serif', serif;font-size:9.6px;color:#3a3b47;letter-spacing:0.15px;font-style:italic;transform:scaleX(0.82);transform-origin:left 0;">offenen Landschaften.</div><div class="l" style="left:1173.1px;top:508.56px;font-family:'Liberation Serif', serif;font-size:9.6px;color:#3a3b47;letter-spacing:0.15px;font-style:italic;transform:scaleX(0.82);transform-origin:left 0;">Sowie romantischen</div><div class="l" style="left:1173.1px;top:519.06px;font-family:'Liberation Serif', serif;font-size:9.6px;color:#3a3b47;letter-spacing:0.15px;font-style:italic;transform:scaleX(0.82);transform-origin:left 0;">See-Bildern, wie hier</div><div class="l" style="left:1173.1px;top:529.56px;font-family:'Liberation Serif', serif;font-size:9.6px;color:#3a3b47;letter-spacing:0.15px;font-style:italic;transform:scaleX(0.82);transform-origin:left 0;">am Lake Rotoaira.</div><div class="l" style="left:1173.1px;top:550.56px;font-family:'Liberation Serif', serif;font-size:9.6px;color:#3a3b47;letter-spacing:0.15px;font-style:italic;transform:scaleX(0.82);transform-origin:left 0;">Seite 10/11:</div><div class="l" style="left:1173.1px;top:561.06px;font-family:'Liberation Serif', serif;font-size:9.6px;color:#3a3b47;letter-spacing:0.15px;font-style:italic;transform:scaleX(0.82);transform-origin:left 0;">Dort, wo sich die</div><div class="l" style="left:1173.1px;top:571.56px;font-family:'Liberation Serif', serif;font-size:9.6px;color:#3a3b47;letter-spacing:0.15px;font-style:italic;transform:scaleX(0.82);transform-origin:left 0;">Wassermassen des</div><div class="l" style="left:1173.1px;top:582.06px;font-family:'Liberation Serif', serif;font-size:9.6px;color:#3a3b47;letter-spacing:0.15px;font-style:italic;transform:scaleX(0.82);transform-origin:left 0;">Taupo-Sees beim</div><div class="l" style="left:1173.1px;top:592.56px;font-family:'Liberation Serif', serif;font-size:9.6px;color:#3a3b47;letter-spacing:0.15px;font-style:italic;transform:scaleX(0.82);transform-origin:left 0;">Abfluss durch einen</div><div class="l" style="left:1173.1px;top:603.06px;font-family:'Liberation Serif', serif;font-size:9.6px;color:#3a3b47;letter-spacing:0.15px;font-style:italic;transform:scaleX(0.82);transform-origin:left 0;">200 Meter langen</div><div class="l" style="left:1173.1px;top:613.56px;font-family:'Liberation Serif', serif;font-size:9.6px;color:#3a3b47;letter-spacing:0.15px;font-style:italic;transform:scaleX(0.82);transform-origin:left 0;">und nur wenige</div><div class="l" style="left:1173.1px;top:624.06px;font-family:'Liberation Serif', serif;font-size:9.6px;color:#3a3b47;letter-spacing:0.15px;font-style:italic;transform:scaleX(0.82);transform-origin:left 0;">Meter breiten Fels-</div><div class="l" style="left:1173.1px;top:634.56px;font-family:'Liberation Serif', serif;font-size:9.6px;color:#3a3b47;letter-spacing:0.15px;font-style:italic;transform:scaleX(0.82);transform-origin:left 0;">kanal drängen,</div><div class="l" style="left:1173.1px;top:645.06px;font-family:'Liberation Serif', serif;font-size:9.6px;color:#3a3b47;letter-spacing:0.15px;font-style:italic;transform:scaleX(0.82);transform-origin:left 0;">drückt sie die geballte</div><div class="l" style="left:1173.1px;top:655.56px;font-family:'Liberation Serif', serif;font-size:9.6px;color:#3a3b47;letter-spacing:0.15px;font-style:italic;transform:scaleX(0.82);transform-origin:left 0;">Kraft mit donnern-</div><div class="l" style="left:1173.1px;top:666.06px;font-family:'Liberation Serif', serif;font-size:9.6px;color:#3a3b47;letter-spacing:0.15px;font-style:italic;transform:scaleX(0.82);transform-origin:left 0;">dem Getöse zehn</div><div class="l" style="left:1173.1px;top:676.56px;font-family:'Liberation Serif', serif;font-size:9.6px;color:#3a3b47;letter-spacing:0.15px;font-style:italic;transform:scaleX(0.82);transform-origin:left 0;">Meter in die Tiefe.</div><div class="l" style="left:1173.1px;top:687.06px;font-family:'Liberation Serif', serif;font-size:9.6px;color:#3a3b47;letter-spacing:0.15px;font-style:italic;transform:scaleX(0.82);transform-origin:left 0;">Die ungezügelte</div><div class="l" style="left:1173.1px;top:697.56px;font-family:'Liberation Serif', serif;font-size:9.6px;color:#3a3b47;letter-spacing:0.15px;font-style:italic;transform:scaleX(0.82);transform-origin:left 0;">Wildheit der Huka</div><div class="l" style="left:1173.1px;top:708.06px;font-family:'Liberation Serif', serif;font-size:9.6px;color:#3a3b47;letter-spacing:0.15px;font-style:italic;transform:scaleX(0.82);transform-origin:left 0;">Falls steht für Neu-</div><div class="l" style="left:1173.1px;top:718.56px;font-family:'Liberation Serif', serif;font-size:9.6px;color:#3a3b47;letter-spacing:0.15px;font-style:italic;transform:scaleX(0.82);transform-origin:left 0;">seelands unbändige</div><div class="l" style="left:1173.1px;top:729.06px;font-family:'Liberation Serif', serif;font-size:9.6px;color:#3a3b47;letter-spacing:0.15px;font-style:italic;transform:scaleX(0.82);transform-origin:left 0;">Natur.</div><div class="l" style="left:97.5px;top:763.95px;font-family:'Liberation Serif', serif;font-size:12px;color:#363744;letter-spacing:0px;">6</div><div class="l" style="left:1175px;top:763.95px;font-family:'Liberation Serif', serif;font-size:12px;color:#363744;letter-spacing:0px;">7</div>
</body></html>
